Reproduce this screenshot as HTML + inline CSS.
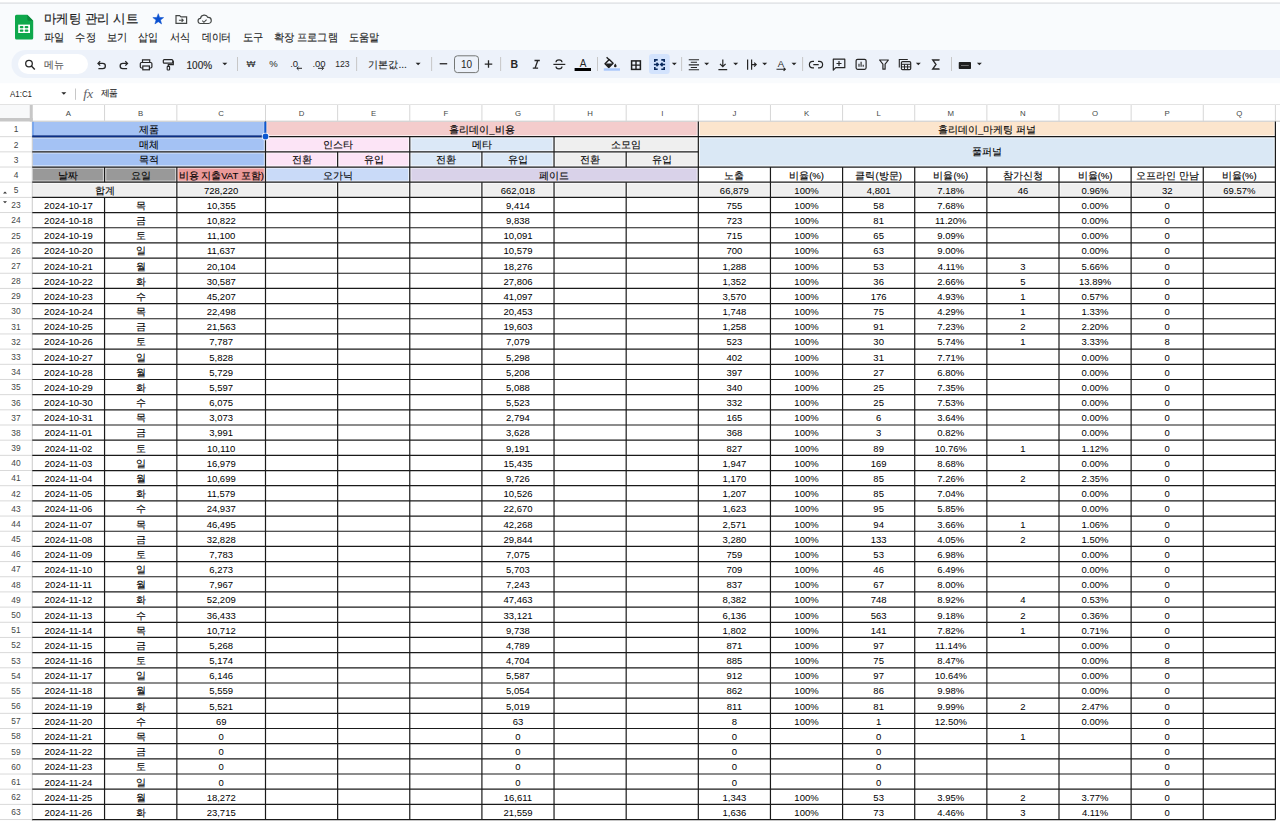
<!DOCTYPE html>
<html><head><meta charset="utf-8"><title>마케팅 관리 시트</title>
<style>html,body{margin:0;padding:0;width:1280px;height:821px;overflow:hidden;background:#fff;font-family:'Liberation Sans', sans-serif;}</style>
</head><body>
<svg width="1280" height="821" viewBox="0 0 1280 821" style="position:absolute;left:0;top:0;font-family:'Liberation Sans', sans-serif">
<rect x="0" y="0" width="1280" height="821" fill="#ffffff"/>
<rect x="0" y="3.5" width="1280" height="80" fill="#f9fbfd"/>
<rect x="0" y="2.5" width="1280" height="1.2" fill="#dadce0"/>
<rect x="11.5" y="50" width="1300" height="28" rx="14" fill="#edf2fa"/>
<rect x="18" y="54" width="70" height="20" rx="10" fill="#ffffff"/>
<rect x="32.26" y="121.50" width="233.24" height="45.53" fill="#a4c2f4"/>
<rect x="265.50" y="121.50" width="432.82" height="15.18" fill="#f4cccc"/>
<rect x="698.32" y="121.50" width="577.09" height="15.18" fill="#fce5cd"/>
<rect x="265.50" y="136.68" width="144.27" height="30.35" fill="#fce4f6"/>
<rect x="409.77" y="136.68" width="144.27" height="30.35" fill="#dbe8f7"/>
<rect x="554.04" y="136.68" width="144.27" height="30.35" fill="#efefef"/>
<rect x="698.32" y="136.68" width="577.09" height="30.35" fill="#dae8f5"/>
<rect x="32.26" y="167.03" width="144.59" height="15.17" fill="#999999"/>
<rect x="176.85" y="167.03" width="88.65" height="15.17" fill="#ea9999"/>
<rect x="265.50" y="167.03" width="144.27" height="15.17" fill="#c9daf8"/>
<rect x="409.77" y="167.03" width="288.54" height="15.17" fill="#d9d2e9"/>
<rect x="32.26" y="182.20" width="1243.14" height="15.18" fill="#efefef"/>
<rect x="0" y="104.5" width="1280" height="17" fill="#ffffff"/>
<rect x="0" y="104.5" width="30" height="14" fill="#f8f9fa"/>
<rect x="0" y="118" width="32.75" height="3.5" fill="#c7c7c7"/>
<rect x="29.75" y="104.5" width="3" height="17" fill="#c7c7c7"/>
<g stroke="#ffffff" stroke-opacity="0.6" stroke-width="3.4"><line x1="32.26" y1="136.68" x2="1275.40" y2="136.68"/><line x1="32.26" y1="151.85" x2="698.32" y2="151.85"/><line x1="32.26" y1="167.03" x2="1275.40" y2="167.03"/><line x1="32.26" y1="182.20" x2="1275.40" y2="182.20"/><line x1="32.26" y1="197.38" x2="1275.40" y2="197.38"/><line x1="265.50" y1="121.50" x2="265.50" y2="197.38"/><line x1="698.32" y1="121.50" x2="698.32" y2="197.38"/><line x1="1275.40" y1="121.50" x2="1275.40" y2="197.38"/><line x1="409.77" y1="136.68" x2="409.77" y2="167.03"/><line x1="554.04" y1="136.68" x2="554.04" y2="167.03"/><line x1="337.64" y1="151.85" x2="337.64" y2="167.03"/><line x1="481.91" y1="151.85" x2="481.91" y2="167.03"/><line x1="626.18" y1="151.85" x2="626.18" y2="167.03"/><line x1="104.56" y1="167.03" x2="104.56" y2="182.20"/><line x1="176.85" y1="167.03" x2="176.85" y2="182.20"/><line x1="409.77" y1="167.03" x2="409.77" y2="182.20"/><line x1="770.45" y1="167.03" x2="770.45" y2="182.20"/><line x1="842.59" y1="167.03" x2="842.59" y2="182.20"/><line x1="914.72" y1="167.03" x2="914.72" y2="182.20"/><line x1="986.86" y1="167.03" x2="986.86" y2="182.20"/><line x1="1059.00" y1="167.03" x2="1059.00" y2="182.20"/><line x1="1131.13" y1="167.03" x2="1131.13" y2="182.20"/><line x1="1203.27" y1="167.03" x2="1203.27" y2="182.20"/><line x1="176.85" y1="182.20" x2="176.85" y2="197.38"/><line x1="337.64" y1="182.20" x2="337.64" y2="197.38"/><line x1="409.77" y1="182.20" x2="409.77" y2="197.38"/><line x1="481.91" y1="182.20" x2="481.91" y2="197.38"/><line x1="554.04" y1="182.20" x2="554.04" y2="197.38"/><line x1="626.18" y1="182.20" x2="626.18" y2="197.38"/><line x1="770.45" y1="182.20" x2="770.45" y2="197.38"/><line x1="842.59" y1="182.20" x2="842.59" y2="197.38"/><line x1="914.72" y1="182.20" x2="914.72" y2="197.38"/><line x1="986.86" y1="182.20" x2="986.86" y2="197.38"/><line x1="1059.00" y1="182.20" x2="1059.00" y2="197.38"/><line x1="1131.13" y1="182.20" x2="1131.13" y2="197.38"/><line x1="1203.27" y1="182.20" x2="1203.27" y2="197.38"/></g>
<line x1="0.00" y1="104.56" x2="1280.00" y2="104.56" stroke="#c7c7c7" stroke-width="1.1"/>
<line x1="32.00" y1="121.20" x2="1280.00" y2="121.20" stroke="#c7c7c7" stroke-width="1"/>
<line x1="104.56" y1="104.50" x2="104.56" y2="121.20" stroke="#d6d6d6" stroke-width="1"/>
<line x1="176.85" y1="104.50" x2="176.85" y2="121.20" stroke="#d6d6d6" stroke-width="1"/>
<line x1="265.50" y1="104.50" x2="265.50" y2="121.20" stroke="#d6d6d6" stroke-width="1"/>
<line x1="337.64" y1="104.50" x2="337.64" y2="121.20" stroke="#d6d6d6" stroke-width="1"/>
<line x1="409.77" y1="104.50" x2="409.77" y2="121.20" stroke="#d6d6d6" stroke-width="1"/>
<line x1="481.91" y1="104.50" x2="481.91" y2="121.20" stroke="#d6d6d6" stroke-width="1"/>
<line x1="554.04" y1="104.50" x2="554.04" y2="121.20" stroke="#d6d6d6" stroke-width="1"/>
<line x1="626.18" y1="104.50" x2="626.18" y2="121.20" stroke="#d6d6d6" stroke-width="1"/>
<line x1="698.32" y1="104.50" x2="698.32" y2="121.20" stroke="#d6d6d6" stroke-width="1"/>
<line x1="770.45" y1="104.50" x2="770.45" y2="121.20" stroke="#d6d6d6" stroke-width="1"/>
<line x1="842.59" y1="104.50" x2="842.59" y2="121.20" stroke="#d6d6d6" stroke-width="1"/>
<line x1="914.72" y1="104.50" x2="914.72" y2="121.20" stroke="#d6d6d6" stroke-width="1"/>
<line x1="986.86" y1="104.50" x2="986.86" y2="121.20" stroke="#d6d6d6" stroke-width="1"/>
<line x1="1059.00" y1="104.50" x2="1059.00" y2="121.20" stroke="#d6d6d6" stroke-width="1"/>
<line x1="1131.13" y1="104.50" x2="1131.13" y2="121.20" stroke="#d6d6d6" stroke-width="1"/>
<line x1="1203.27" y1="104.50" x2="1203.27" y2="121.20" stroke="#d6d6d6" stroke-width="1"/>
<line x1="1275.40" y1="104.50" x2="1275.40" y2="121.20" stroke="#d6d6d6" stroke-width="1"/>
<line x1="0.00" y1="136.68" x2="32.00" y2="136.68" stroke="#d9d9d9" stroke-width="1"/>
<line x1="0.00" y1="151.85" x2="32.00" y2="151.85" stroke="#d9d9d9" stroke-width="1"/>
<line x1="0.00" y1="167.03" x2="32.00" y2="167.03" stroke="#d9d9d9" stroke-width="1"/>
<line x1="0.00" y1="182.20" x2="32.00" y2="182.20" stroke="#d9d9d9" stroke-width="1"/>
<line x1="0.00" y1="197.38" x2="32.00" y2="197.38" stroke="#d9d9d9" stroke-width="1"/>
<line x1="0.00" y1="212.55" x2="32.00" y2="212.55" stroke="#d9d9d9" stroke-width="1"/>
<line x1="0.00" y1="227.73" x2="32.00" y2="227.73" stroke="#d9d9d9" stroke-width="1"/>
<line x1="0.00" y1="242.90" x2="32.00" y2="242.90" stroke="#d9d9d9" stroke-width="1"/>
<line x1="0.00" y1="258.08" x2="32.00" y2="258.08" stroke="#d9d9d9" stroke-width="1"/>
<line x1="0.00" y1="273.25" x2="32.00" y2="273.25" stroke="#d9d9d9" stroke-width="1"/>
<line x1="0.00" y1="288.43" x2="32.00" y2="288.43" stroke="#d9d9d9" stroke-width="1"/>
<line x1="0.00" y1="303.60" x2="32.00" y2="303.60" stroke="#d9d9d9" stroke-width="1"/>
<line x1="0.00" y1="318.77" x2="32.00" y2="318.77" stroke="#d9d9d9" stroke-width="1"/>
<line x1="0.00" y1="333.95" x2="32.00" y2="333.95" stroke="#d9d9d9" stroke-width="1"/>
<line x1="0.00" y1="349.12" x2="32.00" y2="349.12" stroke="#d9d9d9" stroke-width="1"/>
<line x1="0.00" y1="364.30" x2="32.00" y2="364.30" stroke="#d9d9d9" stroke-width="1"/>
<line x1="0.00" y1="379.48" x2="32.00" y2="379.48" stroke="#d9d9d9" stroke-width="1"/>
<line x1="0.00" y1="394.65" x2="32.00" y2="394.65" stroke="#d9d9d9" stroke-width="1"/>
<line x1="0.00" y1="409.82" x2="32.00" y2="409.82" stroke="#d9d9d9" stroke-width="1"/>
<line x1="0.00" y1="425.00" x2="32.00" y2="425.00" stroke="#d9d9d9" stroke-width="1"/>
<line x1="0.00" y1="440.18" x2="32.00" y2="440.18" stroke="#d9d9d9" stroke-width="1"/>
<line x1="0.00" y1="455.35" x2="32.00" y2="455.35" stroke="#d9d9d9" stroke-width="1"/>
<line x1="0.00" y1="470.53" x2="32.00" y2="470.53" stroke="#d9d9d9" stroke-width="1"/>
<line x1="0.00" y1="485.70" x2="32.00" y2="485.70" stroke="#d9d9d9" stroke-width="1"/>
<line x1="0.00" y1="500.88" x2="32.00" y2="500.88" stroke="#d9d9d9" stroke-width="1"/>
<line x1="0.00" y1="516.05" x2="32.00" y2="516.05" stroke="#d9d9d9" stroke-width="1"/>
<line x1="0.00" y1="531.23" x2="32.00" y2="531.23" stroke="#d9d9d9" stroke-width="1"/>
<line x1="0.00" y1="546.40" x2="32.00" y2="546.40" stroke="#d9d9d9" stroke-width="1"/>
<line x1="0.00" y1="561.58" x2="32.00" y2="561.58" stroke="#d9d9d9" stroke-width="1"/>
<line x1="0.00" y1="576.75" x2="32.00" y2="576.75" stroke="#d9d9d9" stroke-width="1"/>
<line x1="0.00" y1="591.92" x2="32.00" y2="591.92" stroke="#d9d9d9" stroke-width="1"/>
<line x1="0.00" y1="607.10" x2="32.00" y2="607.10" stroke="#d9d9d9" stroke-width="1"/>
<line x1="0.00" y1="622.28" x2="32.00" y2="622.28" stroke="#d9d9d9" stroke-width="1"/>
<line x1="0.00" y1="637.45" x2="32.00" y2="637.45" stroke="#d9d9d9" stroke-width="1"/>
<line x1="0.00" y1="652.62" x2="32.00" y2="652.62" stroke="#d9d9d9" stroke-width="1"/>
<line x1="0.00" y1="667.80" x2="32.00" y2="667.80" stroke="#d9d9d9" stroke-width="1"/>
<line x1="0.00" y1="682.98" x2="32.00" y2="682.98" stroke="#d9d9d9" stroke-width="1"/>
<line x1="0.00" y1="698.15" x2="32.00" y2="698.15" stroke="#d9d9d9" stroke-width="1"/>
<line x1="0.00" y1="713.33" x2="32.00" y2="713.33" stroke="#d9d9d9" stroke-width="1"/>
<line x1="0.00" y1="728.50" x2="32.00" y2="728.50" stroke="#d9d9d9" stroke-width="1"/>
<line x1="0.00" y1="743.68" x2="32.00" y2="743.68" stroke="#d9d9d9" stroke-width="1"/>
<line x1="0.00" y1="758.85" x2="32.00" y2="758.85" stroke="#d9d9d9" stroke-width="1"/>
<line x1="0.00" y1="774.02" x2="32.00" y2="774.02" stroke="#d9d9d9" stroke-width="1"/>
<line x1="0.00" y1="789.20" x2="32.00" y2="789.20" stroke="#d9d9d9" stroke-width="1"/>
<line x1="0.00" y1="804.38" x2="32.00" y2="804.38" stroke="#d9d9d9" stroke-width="1"/>
<line x1="0.00" y1="819.55" x2="32.00" y2="819.55" stroke="#d9d9d9" stroke-width="1"/>
<line x1="32.30" y1="121.50" x2="32.30" y2="821.00" stroke="#cfcfcf" stroke-width="1.1"/>
<line x1="32.26" y1="136.68" x2="1275.40" y2="136.68" stroke="#1a1a1a" stroke-width="1.2"/>
<line x1="32.26" y1="151.85" x2="698.32" y2="151.85" stroke="#1a1a1a" stroke-width="1.2"/>
<line x1="32.26" y1="167.03" x2="1275.40" y2="167.03" stroke="#1a1a1a" stroke-width="1.2"/>
<line x1="32.26" y1="182.20" x2="1275.40" y2="182.20" stroke="#1a1a1a" stroke-width="1.2"/>
<line x1="32.26" y1="197.38" x2="1275.40" y2="197.38" stroke="#1a1a1a" stroke-width="1.2"/>
<line x1="32.26" y1="212.55" x2="1275.40" y2="212.55" stroke="#1a1a1a" stroke-width="1.2"/>
<line x1="32.26" y1="227.73" x2="1275.40" y2="227.73" stroke="#1a1a1a" stroke-width="1.2"/>
<line x1="32.26" y1="242.90" x2="1275.40" y2="242.90" stroke="#1a1a1a" stroke-width="1.2"/>
<line x1="32.26" y1="258.08" x2="1275.40" y2="258.08" stroke="#1a1a1a" stroke-width="1.2"/>
<line x1="32.26" y1="273.25" x2="1275.40" y2="273.25" stroke="#1a1a1a" stroke-width="1.2"/>
<line x1="32.26" y1="288.43" x2="1275.40" y2="288.43" stroke="#1a1a1a" stroke-width="1.2"/>
<line x1="32.26" y1="303.60" x2="1275.40" y2="303.60" stroke="#1a1a1a" stroke-width="1.2"/>
<line x1="32.26" y1="318.77" x2="1275.40" y2="318.77" stroke="#1a1a1a" stroke-width="1.2"/>
<line x1="32.26" y1="333.95" x2="1275.40" y2="333.95" stroke="#1a1a1a" stroke-width="1.2"/>
<line x1="32.26" y1="349.12" x2="1275.40" y2="349.12" stroke="#1a1a1a" stroke-width="1.2"/>
<line x1="32.26" y1="364.30" x2="1275.40" y2="364.30" stroke="#1a1a1a" stroke-width="1.2"/>
<line x1="32.26" y1="379.48" x2="1275.40" y2="379.48" stroke="#1a1a1a" stroke-width="1.2"/>
<line x1="32.26" y1="394.65" x2="1275.40" y2="394.65" stroke="#1a1a1a" stroke-width="1.2"/>
<line x1="32.26" y1="409.82" x2="1275.40" y2="409.82" stroke="#1a1a1a" stroke-width="1.2"/>
<line x1="32.26" y1="425.00" x2="1275.40" y2="425.00" stroke="#1a1a1a" stroke-width="1.2"/>
<line x1="32.26" y1="440.18" x2="1275.40" y2="440.18" stroke="#1a1a1a" stroke-width="1.2"/>
<line x1="32.26" y1="455.35" x2="1275.40" y2="455.35" stroke="#1a1a1a" stroke-width="1.2"/>
<line x1="32.26" y1="470.53" x2="1275.40" y2="470.53" stroke="#1a1a1a" stroke-width="1.2"/>
<line x1="32.26" y1="485.70" x2="1275.40" y2="485.70" stroke="#1a1a1a" stroke-width="1.2"/>
<line x1="32.26" y1="500.88" x2="1275.40" y2="500.88" stroke="#1a1a1a" stroke-width="1.2"/>
<line x1="32.26" y1="516.05" x2="1275.40" y2="516.05" stroke="#1a1a1a" stroke-width="1.2"/>
<line x1="32.26" y1="531.23" x2="1275.40" y2="531.23" stroke="#1a1a1a" stroke-width="1.2"/>
<line x1="32.26" y1="546.40" x2="1275.40" y2="546.40" stroke="#1a1a1a" stroke-width="1.2"/>
<line x1="32.26" y1="561.58" x2="1275.40" y2="561.58" stroke="#1a1a1a" stroke-width="1.2"/>
<line x1="32.26" y1="576.75" x2="1275.40" y2="576.75" stroke="#1a1a1a" stroke-width="1.2"/>
<line x1="32.26" y1="591.92" x2="1275.40" y2="591.92" stroke="#1a1a1a" stroke-width="1.2"/>
<line x1="32.26" y1="607.10" x2="1275.40" y2="607.10" stroke="#1a1a1a" stroke-width="1.2"/>
<line x1="32.26" y1="622.28" x2="1275.40" y2="622.28" stroke="#1a1a1a" stroke-width="1.2"/>
<line x1="32.26" y1="637.45" x2="1275.40" y2="637.45" stroke="#1a1a1a" stroke-width="1.2"/>
<line x1="32.26" y1="652.62" x2="1275.40" y2="652.62" stroke="#1a1a1a" stroke-width="1.2"/>
<line x1="32.26" y1="667.80" x2="1275.40" y2="667.80" stroke="#1a1a1a" stroke-width="1.2"/>
<line x1="32.26" y1="682.98" x2="1275.40" y2="682.98" stroke="#1a1a1a" stroke-width="1.2"/>
<line x1="32.26" y1="698.15" x2="1275.40" y2="698.15" stroke="#1a1a1a" stroke-width="1.2"/>
<line x1="32.26" y1="713.33" x2="1275.40" y2="713.33" stroke="#1a1a1a" stroke-width="1.2"/>
<line x1="32.26" y1="728.50" x2="1275.40" y2="728.50" stroke="#1a1a1a" stroke-width="1.2"/>
<line x1="32.26" y1="743.68" x2="1275.40" y2="743.68" stroke="#1a1a1a" stroke-width="1.2"/>
<line x1="32.26" y1="758.85" x2="1275.40" y2="758.85" stroke="#1a1a1a" stroke-width="1.2"/>
<line x1="32.26" y1="774.02" x2="1275.40" y2="774.02" stroke="#1a1a1a" stroke-width="1.2"/>
<line x1="32.26" y1="789.20" x2="1275.40" y2="789.20" stroke="#1a1a1a" stroke-width="1.2"/>
<line x1="32.26" y1="804.38" x2="1275.40" y2="804.38" stroke="#1a1a1a" stroke-width="1.2"/>
<line x1="32.26" y1="819.55" x2="1275.40" y2="819.55" stroke="#1a1a1a" stroke-width="1.2"/>
<line x1="265.50" y1="121.50" x2="265.50" y2="819.55" stroke="#1a1a1a" stroke-width="1.2"/>
<line x1="698.32" y1="121.50" x2="698.32" y2="819.55" stroke="#1a1a1a" stroke-width="1.2"/>
<line x1="1275.40" y1="121.50" x2="1275.40" y2="819.55" stroke="#1a1a1a" stroke-width="1.2"/>
<line x1="409.77" y1="136.68" x2="409.77" y2="167.03" stroke="#1a1a1a" stroke-width="1.2"/>
<line x1="554.04" y1="136.68" x2="554.04" y2="167.03" stroke="#1a1a1a" stroke-width="1.2"/>
<line x1="337.64" y1="151.85" x2="337.64" y2="167.03" stroke="#1a1a1a" stroke-width="1.2"/>
<line x1="481.91" y1="151.85" x2="481.91" y2="167.03" stroke="#1a1a1a" stroke-width="1.2"/>
<line x1="626.18" y1="151.85" x2="626.18" y2="167.03" stroke="#1a1a1a" stroke-width="1.2"/>
<line x1="104.56" y1="167.03" x2="104.56" y2="182.20" stroke="#1a1a1a" stroke-width="1.2"/>
<line x1="176.85" y1="167.03" x2="176.85" y2="182.20" stroke="#1a1a1a" stroke-width="1.2"/>
<line x1="409.77" y1="167.03" x2="409.77" y2="182.20" stroke="#1a1a1a" stroke-width="1.2"/>
<line x1="770.45" y1="167.03" x2="770.45" y2="182.20" stroke="#1a1a1a" stroke-width="1.2"/>
<line x1="842.59" y1="167.03" x2="842.59" y2="182.20" stroke="#1a1a1a" stroke-width="1.2"/>
<line x1="914.72" y1="167.03" x2="914.72" y2="182.20" stroke="#1a1a1a" stroke-width="1.2"/>
<line x1="986.86" y1="167.03" x2="986.86" y2="182.20" stroke="#1a1a1a" stroke-width="1.2"/>
<line x1="1059.00" y1="167.03" x2="1059.00" y2="182.20" stroke="#1a1a1a" stroke-width="1.2"/>
<line x1="1131.13" y1="167.03" x2="1131.13" y2="182.20" stroke="#1a1a1a" stroke-width="1.2"/>
<line x1="1203.27" y1="167.03" x2="1203.27" y2="182.20" stroke="#1a1a1a" stroke-width="1.2"/>
<line x1="176.85" y1="182.20" x2="176.85" y2="197.38" stroke="#1a1a1a" stroke-width="1.2"/>
<line x1="337.64" y1="182.20" x2="337.64" y2="197.38" stroke="#1a1a1a" stroke-width="1.2"/>
<line x1="409.77" y1="182.20" x2="409.77" y2="197.38" stroke="#1a1a1a" stroke-width="1.2"/>
<line x1="481.91" y1="182.20" x2="481.91" y2="197.38" stroke="#1a1a1a" stroke-width="1.2"/>
<line x1="554.04" y1="182.20" x2="554.04" y2="197.38" stroke="#1a1a1a" stroke-width="1.2"/>
<line x1="626.18" y1="182.20" x2="626.18" y2="197.38" stroke="#1a1a1a" stroke-width="1.2"/>
<line x1="770.45" y1="182.20" x2="770.45" y2="197.38" stroke="#1a1a1a" stroke-width="1.2"/>
<line x1="842.59" y1="182.20" x2="842.59" y2="197.38" stroke="#1a1a1a" stroke-width="1.2"/>
<line x1="914.72" y1="182.20" x2="914.72" y2="197.38" stroke="#1a1a1a" stroke-width="1.2"/>
<line x1="986.86" y1="182.20" x2="986.86" y2="197.38" stroke="#1a1a1a" stroke-width="1.2"/>
<line x1="1059.00" y1="182.20" x2="1059.00" y2="197.38" stroke="#1a1a1a" stroke-width="1.2"/>
<line x1="1131.13" y1="182.20" x2="1131.13" y2="197.38" stroke="#1a1a1a" stroke-width="1.2"/>
<line x1="1203.27" y1="182.20" x2="1203.27" y2="197.38" stroke="#1a1a1a" stroke-width="1.2"/>
<line x1="104.56" y1="197.38" x2="104.56" y2="819.55" stroke="#1a1a1a" stroke-width="1.2"/>
<line x1="176.85" y1="197.38" x2="176.85" y2="819.55" stroke="#1a1a1a" stroke-width="1.2"/>
<line x1="337.64" y1="197.38" x2="337.64" y2="819.55" stroke="#1a1a1a" stroke-width="1.2"/>
<line x1="409.77" y1="197.38" x2="409.77" y2="819.55" stroke="#1a1a1a" stroke-width="1.2"/>
<line x1="481.91" y1="197.38" x2="481.91" y2="819.55" stroke="#1a1a1a" stroke-width="1.2"/>
<line x1="554.04" y1="197.38" x2="554.04" y2="819.55" stroke="#1a1a1a" stroke-width="1.2"/>
<line x1="626.18" y1="197.38" x2="626.18" y2="819.55" stroke="#1a1a1a" stroke-width="1.2"/>
<line x1="770.45" y1="197.38" x2="770.45" y2="819.55" stroke="#1a1a1a" stroke-width="1.2"/>
<line x1="842.59" y1="197.38" x2="842.59" y2="819.55" stroke="#1a1a1a" stroke-width="1.2"/>
<line x1="914.72" y1="197.38" x2="914.72" y2="819.55" stroke="#1a1a1a" stroke-width="1.2"/>
<line x1="986.86" y1="197.38" x2="986.86" y2="819.55" stroke="#1a1a1a" stroke-width="1.2"/>
<line x1="1059.00" y1="197.38" x2="1059.00" y2="819.55" stroke="#1a1a1a" stroke-width="1.2"/>
<line x1="1131.13" y1="197.38" x2="1131.13" y2="819.55" stroke="#1a1a1a" stroke-width="1.2"/>
<line x1="1203.27" y1="197.38" x2="1203.27" y2="819.55" stroke="#1a1a1a" stroke-width="1.2"/>
<rect x="32.4" y="121.8" width="1.1" height="15" fill="#4f8ef0"/>
<rect x="32.4" y="135.3" width="233.6" height="2" fill="#0b2f86"/>
<rect x="264.3" y="121.8" width="2" height="15" fill="#0b57d0"/>
<circle cx="265.5" cy="136.5" r="3.7" fill="#ffffff"/><circle cx="265.5" cy="136.5" r="2.9" fill="#0b57d0"/>
<text x="68.41" y="116.00" font-size="7.8" text-anchor="middle" fill="#444746" font-weight="normal" >A</text>
<text x="140.70" y="116.00" font-size="7.8" text-anchor="middle" fill="#444746" font-weight="normal" >B</text>
<text x="221.18" y="116.00" font-size="7.8" text-anchor="middle" fill="#444746" font-weight="normal" >C</text>
<text x="301.57" y="116.00" font-size="7.8" text-anchor="middle" fill="#444746" font-weight="normal" >D</text>
<text x="373.70" y="116.00" font-size="7.8" text-anchor="middle" fill="#444746" font-weight="normal" >E</text>
<text x="445.84" y="116.00" font-size="7.8" text-anchor="middle" fill="#444746" font-weight="normal" >F</text>
<text x="517.98" y="116.00" font-size="7.8" text-anchor="middle" fill="#444746" font-weight="normal" >G</text>
<text x="590.11" y="116.00" font-size="7.8" text-anchor="middle" fill="#444746" font-weight="normal" >H</text>
<text x="662.25" y="116.00" font-size="7.8" text-anchor="middle" fill="#444746" font-weight="normal" >I</text>
<text x="734.38" y="116.00" font-size="7.8" text-anchor="middle" fill="#444746" font-weight="normal" >J</text>
<text x="806.52" y="116.00" font-size="7.8" text-anchor="middle" fill="#444746" font-weight="normal" >K</text>
<text x="878.66" y="116.00" font-size="7.8" text-anchor="middle" fill="#444746" font-weight="normal" >L</text>
<text x="950.79" y="116.00" font-size="7.8" text-anchor="middle" fill="#444746" font-weight="normal" >M</text>
<text x="1022.93" y="116.00" font-size="7.8" text-anchor="middle" fill="#444746" font-weight="normal" >N</text>
<text x="1095.06" y="116.00" font-size="7.8" text-anchor="middle" fill="#444746" font-weight="normal" >O</text>
<text x="1167.20" y="116.00" font-size="7.8" text-anchor="middle" fill="#444746" font-weight="normal" >P</text>
<text x="1239.34" y="116.00" font-size="7.8" text-anchor="middle" fill="#444746" font-weight="normal" >Q</text>
<text x="16.00" y="132.38" font-size="8.4" text-anchor="middle" fill="#444746" font-weight="normal" >1</text>
<text x="16.00" y="147.55" font-size="8.4" text-anchor="middle" fill="#444746" font-weight="normal" >2</text>
<text x="16.00" y="162.72" font-size="8.4" text-anchor="middle" fill="#444746" font-weight="normal" >3</text>
<text x="16.00" y="177.90" font-size="8.4" text-anchor="middle" fill="#444746" font-weight="normal" >4</text>
<text x="16.00" y="193.07" font-size="8.4" text-anchor="middle" fill="#444746" font-weight="normal" >5</text>
<text x="16.00" y="208.25" font-size="8.4" text-anchor="middle" fill="#444746" font-weight="normal" >23</text>
<text x="16.00" y="223.43" font-size="8.4" text-anchor="middle" fill="#444746" font-weight="normal" >24</text>
<text x="16.00" y="238.60" font-size="8.4" text-anchor="middle" fill="#444746" font-weight="normal" >25</text>
<text x="16.00" y="253.78" font-size="8.4" text-anchor="middle" fill="#444746" font-weight="normal" >26</text>
<text x="16.00" y="268.95" font-size="8.4" text-anchor="middle" fill="#444746" font-weight="normal" >27</text>
<text x="16.00" y="284.12" font-size="8.4" text-anchor="middle" fill="#444746" font-weight="normal" >28</text>
<text x="16.00" y="299.30" font-size="8.4" text-anchor="middle" fill="#444746" font-weight="normal" >29</text>
<text x="16.00" y="314.47" font-size="8.4" text-anchor="middle" fill="#444746" font-weight="normal" >30</text>
<text x="16.00" y="329.65" font-size="8.4" text-anchor="middle" fill="#444746" font-weight="normal" >31</text>
<text x="16.00" y="344.82" font-size="8.4" text-anchor="middle" fill="#444746" font-weight="normal" >32</text>
<text x="16.00" y="360.00" font-size="8.4" text-anchor="middle" fill="#444746" font-weight="normal" >33</text>
<text x="16.00" y="375.18" font-size="8.4" text-anchor="middle" fill="#444746" font-weight="normal" >34</text>
<text x="16.00" y="390.35" font-size="8.4" text-anchor="middle" fill="#444746" font-weight="normal" >35</text>
<text x="16.00" y="405.52" font-size="8.4" text-anchor="middle" fill="#444746" font-weight="normal" >36</text>
<text x="16.00" y="420.70" font-size="8.4" text-anchor="middle" fill="#444746" font-weight="normal" >37</text>
<text x="16.00" y="435.88" font-size="8.4" text-anchor="middle" fill="#444746" font-weight="normal" >38</text>
<text x="16.00" y="451.05" font-size="8.4" text-anchor="middle" fill="#444746" font-weight="normal" >39</text>
<text x="16.00" y="466.23" font-size="8.4" text-anchor="middle" fill="#444746" font-weight="normal" >40</text>
<text x="16.00" y="481.40" font-size="8.4" text-anchor="middle" fill="#444746" font-weight="normal" >41</text>
<text x="16.00" y="496.57" font-size="8.4" text-anchor="middle" fill="#444746" font-weight="normal" >42</text>
<text x="16.00" y="511.75" font-size="8.4" text-anchor="middle" fill="#444746" font-weight="normal" >43</text>
<text x="16.00" y="526.93" font-size="8.4" text-anchor="middle" fill="#444746" font-weight="normal" >44</text>
<text x="16.00" y="542.10" font-size="8.4" text-anchor="middle" fill="#444746" font-weight="normal" >45</text>
<text x="16.00" y="557.28" font-size="8.4" text-anchor="middle" fill="#444746" font-weight="normal" >46</text>
<text x="16.00" y="572.45" font-size="8.4" text-anchor="middle" fill="#444746" font-weight="normal" >47</text>
<text x="16.00" y="587.62" font-size="8.4" text-anchor="middle" fill="#444746" font-weight="normal" >48</text>
<text x="16.00" y="602.80" font-size="8.4" text-anchor="middle" fill="#444746" font-weight="normal" >49</text>
<text x="16.00" y="617.98" font-size="8.4" text-anchor="middle" fill="#444746" font-weight="normal" >50</text>
<text x="16.00" y="633.15" font-size="8.4" text-anchor="middle" fill="#444746" font-weight="normal" >51</text>
<text x="16.00" y="648.33" font-size="8.4" text-anchor="middle" fill="#444746" font-weight="normal" >52</text>
<text x="16.00" y="663.50" font-size="8.4" text-anchor="middle" fill="#444746" font-weight="normal" >53</text>
<text x="16.00" y="678.68" font-size="8.4" text-anchor="middle" fill="#444746" font-weight="normal" >54</text>
<text x="16.00" y="693.85" font-size="8.4" text-anchor="middle" fill="#444746" font-weight="normal" >55</text>
<text x="16.00" y="709.03" font-size="8.4" text-anchor="middle" fill="#444746" font-weight="normal" >56</text>
<text x="16.00" y="724.20" font-size="8.4" text-anchor="middle" fill="#444746" font-weight="normal" >57</text>
<text x="16.00" y="739.38" font-size="8.4" text-anchor="middle" fill="#444746" font-weight="normal" >58</text>
<text x="16.00" y="754.55" font-size="8.4" text-anchor="middle" fill="#444746" font-weight="normal" >59</text>
<text x="16.00" y="769.73" font-size="8.4" text-anchor="middle" fill="#444746" font-weight="normal" >60</text>
<text x="16.00" y="784.90" font-size="8.4" text-anchor="middle" fill="#444746" font-weight="normal" >61</text>
<text x="16.00" y="800.08" font-size="8.4" text-anchor="middle" fill="#444746" font-weight="normal" >62</text>
<text x="16.00" y="815.25" font-size="8.4" text-anchor="middle" fill="#444746" font-weight="normal" >63</text>
<path d="M3 193.6 l2 -2.2 2 2.2z" fill="#333"/><path d="M3 201.3 l2 2 2 -2z" fill="#333"/>
<defs><clipPath id="clipC4"><rect x="177.5" y="167.03" width="87.5" height="15.18"/></clipPath></defs>
<text x="148.88" y="132.98" font-size="9.5" text-anchor="middle" fill="#000" font-weight="normal"  stroke="#000" stroke-width="0.1">제품</text>
<text x="481.91" y="132.98" font-size="9.5" text-anchor="middle" fill="#000" font-weight="normal"  stroke="#000" stroke-width="0.12">홀리데이_비용</text>
<text x="986.86" y="132.98" font-size="9.5" text-anchor="middle" fill="#000" font-weight="normal"  stroke="#000" stroke-width="0.12">홀리데이_마케팅 퍼널</text>
<text x="148.88" y="148.15" font-size="9.5" text-anchor="middle" fill="#000" font-weight="normal"  stroke="#000" stroke-width="0.1">매체</text>
<text x="337.64" y="148.15" font-size="9.5" text-anchor="middle" fill="#000" font-weight="normal"  stroke="#000" stroke-width="0.12">인스타</text>
<text x="481.91" y="148.15" font-size="9.5" text-anchor="middle" fill="#000" font-weight="normal"  stroke="#000" stroke-width="0.12">메타</text>
<text x="626.18" y="148.15" font-size="9.5" text-anchor="middle" fill="#000" font-weight="normal"  stroke="#000" stroke-width="0.12">소모임</text>
<text x="986.86" y="155.22" font-size="9.5" text-anchor="middle" fill="#000" font-weight="normal"  stroke="#000" stroke-width="0.12">풀퍼널</text>
<text x="148.88" y="163.33" font-size="9.5" text-anchor="middle" fill="#000" font-weight="normal"  stroke="#000" stroke-width="0.1">목적</text>
<text x="301.57" y="163.33" font-size="9.5" text-anchor="middle" fill="#000" font-weight="normal"  stroke="#000" stroke-width="0.12">전환</text>
<text x="373.70" y="163.33" font-size="9.5" text-anchor="middle" fill="#000" font-weight="normal"  stroke="#000" stroke-width="0.12">유입</text>
<text x="445.84" y="163.33" font-size="9.5" text-anchor="middle" fill="#000" font-weight="normal"  stroke="#000" stroke-width="0.12">전환</text>
<text x="517.98" y="163.33" font-size="9.5" text-anchor="middle" fill="#000" font-weight="normal"  stroke="#000" stroke-width="0.12">유입</text>
<text x="590.11" y="163.33" font-size="9.5" text-anchor="middle" fill="#000" font-weight="normal"  stroke="#000" stroke-width="0.12">전환</text>
<text x="662.25" y="163.33" font-size="9.5" text-anchor="middle" fill="#000" font-weight="normal"  stroke="#000" stroke-width="0.12">유입</text>
<text x="68.41" y="178.50" font-size="9.5" text-anchor="middle" fill="#000" font-weight="normal"  stroke="#000" stroke-width="0.1">날짜</text>
<text x="140.70" y="178.50" font-size="9.5" text-anchor="middle" fill="#000" font-weight="normal"  stroke="#000" stroke-width="0.1">요일</text>
<text x="221.18" y="178.50" font-size="9.5" text-anchor="middle" fill="#000" font-weight="normal" clip-path="url(#clipC4)" stroke="#000" stroke-width="0.12">비용 지출VAT 포함)</text>
<text x="337.64" y="178.50" font-size="9.5" text-anchor="middle" fill="#000" font-weight="normal"  stroke="#000" stroke-width="0.12">오가닉</text>
<text x="554.04" y="178.50" font-size="9.5" text-anchor="middle" fill="#000" font-weight="normal"  stroke="#000" stroke-width="0.12">페이드</text>
<text x="734.38" y="178.50" font-size="9.5" text-anchor="middle" fill="#000" font-weight="normal"  stroke="#000" stroke-width="0.12">노출</text>
<text x="806.52" y="178.50" font-size="9.5" text-anchor="middle" fill="#000" font-weight="normal"  stroke="#000" stroke-width="0.12">비율(%)</text>
<text x="878.66" y="178.50" font-size="9.5" text-anchor="middle" fill="#000" font-weight="normal"  stroke="#000" stroke-width="0.12">클릭(방문)</text>
<text x="950.79" y="178.50" font-size="9.5" text-anchor="middle" fill="#000" font-weight="normal"  stroke="#000" stroke-width="0.12">비율(%)</text>
<text x="1022.93" y="178.50" font-size="9.5" text-anchor="middle" fill="#000" font-weight="normal"  stroke="#000" stroke-width="0.12">참가신청</text>
<text x="1095.06" y="178.50" font-size="9.5" text-anchor="middle" fill="#000" font-weight="normal"  stroke="#000" stroke-width="0.12">비율(%)</text>
<text x="1167.20" y="178.50" font-size="9.5" text-anchor="middle" fill="#000" font-weight="normal"  stroke="#000" stroke-width="0.12">오프라인 만남</text>
<text x="1239.34" y="178.50" font-size="9.5" text-anchor="middle" fill="#000" font-weight="normal"  stroke="#000" stroke-width="0.12">비율(%)</text>
<text x="104.55" y="193.68" font-size="9.5" text-anchor="middle" fill="#000" font-weight="normal"  stroke="#000" stroke-width="0.12">합계</text>
<text x="221.18" y="193.68" font-size="9.5" text-anchor="middle" fill="#000" font-weight="normal" >728,220</text>
<text x="517.98" y="193.68" font-size="9.5" text-anchor="middle" fill="#000" font-weight="normal" >662,018</text>
<text x="734.38" y="193.68" font-size="9.5" text-anchor="middle" fill="#000" font-weight="normal" >66,879</text>
<text x="806.52" y="193.68" font-size="9.5" text-anchor="middle" fill="#000" font-weight="normal" >100%</text>
<text x="878.66" y="193.68" font-size="9.5" text-anchor="middle" fill="#000" font-weight="normal" >4,801</text>
<text x="950.79" y="193.68" font-size="9.5" text-anchor="middle" fill="#000" font-weight="normal" >7.18%</text>
<text x="1022.93" y="193.68" font-size="9.5" text-anchor="middle" fill="#000" font-weight="normal" >46</text>
<text x="1095.06" y="193.68" font-size="9.5" text-anchor="middle" fill="#000" font-weight="normal" >0.96%</text>
<text x="1167.20" y="193.68" font-size="9.5" text-anchor="middle" fill="#000" font-weight="normal" >32</text>
<text x="1239.34" y="193.68" font-size="9.5" text-anchor="middle" fill="#000" font-weight="normal" >69.57%</text>
<text x="68.41" y="208.85" font-size="9.5" text-anchor="middle" fill="#000" font-weight="normal" >2024-10-17</text>
<text x="140.70" y="208.85" font-size="9.5" text-anchor="middle" fill="#000" font-weight="normal"  stroke="#000" stroke-width="0.12">목</text>
<text x="221.18" y="208.85" font-size="9.5" text-anchor="middle" fill="#000" font-weight="normal" >10,355</text>
<text x="517.98" y="208.85" font-size="9.5" text-anchor="middle" fill="#000" font-weight="normal" >9,414</text>
<text x="734.38" y="208.85" font-size="9.5" text-anchor="middle" fill="#000" font-weight="normal" >755</text>
<text x="806.52" y="208.85" font-size="9.5" text-anchor="middle" fill="#000" font-weight="normal" >100%</text>
<text x="878.66" y="208.85" font-size="9.5" text-anchor="middle" fill="#000" font-weight="normal" >58</text>
<text x="950.79" y="208.85" font-size="9.5" text-anchor="middle" fill="#000" font-weight="normal" >7.68%</text>
<text x="1095.06" y="208.85" font-size="9.5" text-anchor="middle" fill="#000" font-weight="normal" >0.00%</text>
<text x="1167.20" y="208.85" font-size="9.5" text-anchor="middle" fill="#000" font-weight="normal" >0</text>
<text x="68.41" y="224.03" font-size="9.5" text-anchor="middle" fill="#000" font-weight="normal" >2024-10-18</text>
<text x="140.70" y="224.03" font-size="9.5" text-anchor="middle" fill="#000" font-weight="normal"  stroke="#000" stroke-width="0.12">금</text>
<text x="221.18" y="224.03" font-size="9.5" text-anchor="middle" fill="#000" font-weight="normal" >10,822</text>
<text x="517.98" y="224.03" font-size="9.5" text-anchor="middle" fill="#000" font-weight="normal" >9,838</text>
<text x="734.38" y="224.03" font-size="9.5" text-anchor="middle" fill="#000" font-weight="normal" >723</text>
<text x="806.52" y="224.03" font-size="9.5" text-anchor="middle" fill="#000" font-weight="normal" >100%</text>
<text x="878.66" y="224.03" font-size="9.5" text-anchor="middle" fill="#000" font-weight="normal" >81</text>
<text x="950.79" y="224.03" font-size="9.5" text-anchor="middle" fill="#000" font-weight="normal" >11.20%</text>
<text x="1095.06" y="224.03" font-size="9.5" text-anchor="middle" fill="#000" font-weight="normal" >0.00%</text>
<text x="1167.20" y="224.03" font-size="9.5" text-anchor="middle" fill="#000" font-weight="normal" >0</text>
<text x="68.41" y="239.20" font-size="9.5" text-anchor="middle" fill="#000" font-weight="normal" >2024-10-19</text>
<text x="140.70" y="239.20" font-size="9.5" text-anchor="middle" fill="#000" font-weight="normal"  stroke="#000" stroke-width="0.12">토</text>
<text x="221.18" y="239.20" font-size="9.5" text-anchor="middle" fill="#000" font-weight="normal" >11,100</text>
<text x="517.98" y="239.20" font-size="9.5" text-anchor="middle" fill="#000" font-weight="normal" >10,091</text>
<text x="734.38" y="239.20" font-size="9.5" text-anchor="middle" fill="#000" font-weight="normal" >715</text>
<text x="806.52" y="239.20" font-size="9.5" text-anchor="middle" fill="#000" font-weight="normal" >100%</text>
<text x="878.66" y="239.20" font-size="9.5" text-anchor="middle" fill="#000" font-weight="normal" >65</text>
<text x="950.79" y="239.20" font-size="9.5" text-anchor="middle" fill="#000" font-weight="normal" >9.09%</text>
<text x="1095.06" y="239.20" font-size="9.5" text-anchor="middle" fill="#000" font-weight="normal" >0.00%</text>
<text x="1167.20" y="239.20" font-size="9.5" text-anchor="middle" fill="#000" font-weight="normal" >0</text>
<text x="68.41" y="254.38" font-size="9.5" text-anchor="middle" fill="#000" font-weight="normal" >2024-10-20</text>
<text x="140.70" y="254.38" font-size="9.5" text-anchor="middle" fill="#000" font-weight="normal"  stroke="#000" stroke-width="0.12">일</text>
<text x="221.18" y="254.38" font-size="9.5" text-anchor="middle" fill="#000" font-weight="normal" >11,637</text>
<text x="517.98" y="254.38" font-size="9.5" text-anchor="middle" fill="#000" font-weight="normal" >10,579</text>
<text x="734.38" y="254.38" font-size="9.5" text-anchor="middle" fill="#000" font-weight="normal" >700</text>
<text x="806.52" y="254.38" font-size="9.5" text-anchor="middle" fill="#000" font-weight="normal" >100%</text>
<text x="878.66" y="254.38" font-size="9.5" text-anchor="middle" fill="#000" font-weight="normal" >63</text>
<text x="950.79" y="254.38" font-size="9.5" text-anchor="middle" fill="#000" font-weight="normal" >9.00%</text>
<text x="1095.06" y="254.38" font-size="9.5" text-anchor="middle" fill="#000" font-weight="normal" >0.00%</text>
<text x="1167.20" y="254.38" font-size="9.5" text-anchor="middle" fill="#000" font-weight="normal" >0</text>
<text x="68.41" y="269.55" font-size="9.5" text-anchor="middle" fill="#000" font-weight="normal" >2024-10-21</text>
<text x="140.70" y="269.55" font-size="9.5" text-anchor="middle" fill="#000" font-weight="normal"  stroke="#000" stroke-width="0.12">월</text>
<text x="221.18" y="269.55" font-size="9.5" text-anchor="middle" fill="#000" font-weight="normal" >20,104</text>
<text x="517.98" y="269.55" font-size="9.5" text-anchor="middle" fill="#000" font-weight="normal" >18,276</text>
<text x="734.38" y="269.55" font-size="9.5" text-anchor="middle" fill="#000" font-weight="normal" >1,288</text>
<text x="806.52" y="269.55" font-size="9.5" text-anchor="middle" fill="#000" font-weight="normal" >100%</text>
<text x="878.66" y="269.55" font-size="9.5" text-anchor="middle" fill="#000" font-weight="normal" >53</text>
<text x="950.79" y="269.55" font-size="9.5" text-anchor="middle" fill="#000" font-weight="normal" >4.11%</text>
<text x="1022.93" y="269.55" font-size="9.5" text-anchor="middle" fill="#000" font-weight="normal" >3</text>
<text x="1095.06" y="269.55" font-size="9.5" text-anchor="middle" fill="#000" font-weight="normal" >5.66%</text>
<text x="1167.20" y="269.55" font-size="9.5" text-anchor="middle" fill="#000" font-weight="normal" >0</text>
<text x="68.41" y="284.73" font-size="9.5" text-anchor="middle" fill="#000" font-weight="normal" >2024-10-22</text>
<text x="140.70" y="284.73" font-size="9.5" text-anchor="middle" fill="#000" font-weight="normal"  stroke="#000" stroke-width="0.12">화</text>
<text x="221.18" y="284.73" font-size="9.5" text-anchor="middle" fill="#000" font-weight="normal" >30,587</text>
<text x="517.98" y="284.73" font-size="9.5" text-anchor="middle" fill="#000" font-weight="normal" >27,806</text>
<text x="734.38" y="284.73" font-size="9.5" text-anchor="middle" fill="#000" font-weight="normal" >1,352</text>
<text x="806.52" y="284.73" font-size="9.5" text-anchor="middle" fill="#000" font-weight="normal" >100%</text>
<text x="878.66" y="284.73" font-size="9.5" text-anchor="middle" fill="#000" font-weight="normal" >36</text>
<text x="950.79" y="284.73" font-size="9.5" text-anchor="middle" fill="#000" font-weight="normal" >2.66%</text>
<text x="1022.93" y="284.73" font-size="9.5" text-anchor="middle" fill="#000" font-weight="normal" >5</text>
<text x="1095.06" y="284.73" font-size="9.5" text-anchor="middle" fill="#000" font-weight="normal" >13.89%</text>
<text x="1167.20" y="284.73" font-size="9.5" text-anchor="middle" fill="#000" font-weight="normal" >0</text>
<text x="68.41" y="299.90" font-size="9.5" text-anchor="middle" fill="#000" font-weight="normal" >2024-10-23</text>
<text x="140.70" y="299.90" font-size="9.5" text-anchor="middle" fill="#000" font-weight="normal"  stroke="#000" stroke-width="0.12">수</text>
<text x="221.18" y="299.90" font-size="9.5" text-anchor="middle" fill="#000" font-weight="normal" >45,207</text>
<text x="517.98" y="299.90" font-size="9.5" text-anchor="middle" fill="#000" font-weight="normal" >41,097</text>
<text x="734.38" y="299.90" font-size="9.5" text-anchor="middle" fill="#000" font-weight="normal" >3,570</text>
<text x="806.52" y="299.90" font-size="9.5" text-anchor="middle" fill="#000" font-weight="normal" >100%</text>
<text x="878.66" y="299.90" font-size="9.5" text-anchor="middle" fill="#000" font-weight="normal" >176</text>
<text x="950.79" y="299.90" font-size="9.5" text-anchor="middle" fill="#000" font-weight="normal" >4.93%</text>
<text x="1022.93" y="299.90" font-size="9.5" text-anchor="middle" fill="#000" font-weight="normal" >1</text>
<text x="1095.06" y="299.90" font-size="9.5" text-anchor="middle" fill="#000" font-weight="normal" >0.57%</text>
<text x="1167.20" y="299.90" font-size="9.5" text-anchor="middle" fill="#000" font-weight="normal" >0</text>
<text x="68.41" y="315.07" font-size="9.5" text-anchor="middle" fill="#000" font-weight="normal" >2024-10-24</text>
<text x="140.70" y="315.07" font-size="9.5" text-anchor="middle" fill="#000" font-weight="normal"  stroke="#000" stroke-width="0.12">목</text>
<text x="221.18" y="315.07" font-size="9.5" text-anchor="middle" fill="#000" font-weight="normal" >22,498</text>
<text x="517.98" y="315.07" font-size="9.5" text-anchor="middle" fill="#000" font-weight="normal" >20,453</text>
<text x="734.38" y="315.07" font-size="9.5" text-anchor="middle" fill="#000" font-weight="normal" >1,748</text>
<text x="806.52" y="315.07" font-size="9.5" text-anchor="middle" fill="#000" font-weight="normal" >100%</text>
<text x="878.66" y="315.07" font-size="9.5" text-anchor="middle" fill="#000" font-weight="normal" >75</text>
<text x="950.79" y="315.07" font-size="9.5" text-anchor="middle" fill="#000" font-weight="normal" >4.29%</text>
<text x="1022.93" y="315.07" font-size="9.5" text-anchor="middle" fill="#000" font-weight="normal" >1</text>
<text x="1095.06" y="315.07" font-size="9.5" text-anchor="middle" fill="#000" font-weight="normal" >1.33%</text>
<text x="1167.20" y="315.07" font-size="9.5" text-anchor="middle" fill="#000" font-weight="normal" >0</text>
<text x="68.41" y="330.25" font-size="9.5" text-anchor="middle" fill="#000" font-weight="normal" >2024-10-25</text>
<text x="140.70" y="330.25" font-size="9.5" text-anchor="middle" fill="#000" font-weight="normal"  stroke="#000" stroke-width="0.12">금</text>
<text x="221.18" y="330.25" font-size="9.5" text-anchor="middle" fill="#000" font-weight="normal" >21,563</text>
<text x="517.98" y="330.25" font-size="9.5" text-anchor="middle" fill="#000" font-weight="normal" >19,603</text>
<text x="734.38" y="330.25" font-size="9.5" text-anchor="middle" fill="#000" font-weight="normal" >1,258</text>
<text x="806.52" y="330.25" font-size="9.5" text-anchor="middle" fill="#000" font-weight="normal" >100%</text>
<text x="878.66" y="330.25" font-size="9.5" text-anchor="middle" fill="#000" font-weight="normal" >91</text>
<text x="950.79" y="330.25" font-size="9.5" text-anchor="middle" fill="#000" font-weight="normal" >7.23%</text>
<text x="1022.93" y="330.25" font-size="9.5" text-anchor="middle" fill="#000" font-weight="normal" >2</text>
<text x="1095.06" y="330.25" font-size="9.5" text-anchor="middle" fill="#000" font-weight="normal" >2.20%</text>
<text x="1167.20" y="330.25" font-size="9.5" text-anchor="middle" fill="#000" font-weight="normal" >0</text>
<text x="68.41" y="345.43" font-size="9.5" text-anchor="middle" fill="#000" font-weight="normal" >2024-10-26</text>
<text x="140.70" y="345.43" font-size="9.5" text-anchor="middle" fill="#000" font-weight="normal"  stroke="#000" stroke-width="0.12">토</text>
<text x="221.18" y="345.43" font-size="9.5" text-anchor="middle" fill="#000" font-weight="normal" >7,787</text>
<text x="517.98" y="345.43" font-size="9.5" text-anchor="middle" fill="#000" font-weight="normal" >7,079</text>
<text x="734.38" y="345.43" font-size="9.5" text-anchor="middle" fill="#000" font-weight="normal" >523</text>
<text x="806.52" y="345.43" font-size="9.5" text-anchor="middle" fill="#000" font-weight="normal" >100%</text>
<text x="878.66" y="345.43" font-size="9.5" text-anchor="middle" fill="#000" font-weight="normal" >30</text>
<text x="950.79" y="345.43" font-size="9.5" text-anchor="middle" fill="#000" font-weight="normal" >5.74%</text>
<text x="1022.93" y="345.43" font-size="9.5" text-anchor="middle" fill="#000" font-weight="normal" >1</text>
<text x="1095.06" y="345.43" font-size="9.5" text-anchor="middle" fill="#000" font-weight="normal" >3.33%</text>
<text x="1167.20" y="345.43" font-size="9.5" text-anchor="middle" fill="#000" font-weight="normal" >8</text>
<text x="68.41" y="360.60" font-size="9.5" text-anchor="middle" fill="#000" font-weight="normal" >2024-10-27</text>
<text x="140.70" y="360.60" font-size="9.5" text-anchor="middle" fill="#000" font-weight="normal"  stroke="#000" stroke-width="0.12">일</text>
<text x="221.18" y="360.60" font-size="9.5" text-anchor="middle" fill="#000" font-weight="normal" >5,828</text>
<text x="517.98" y="360.60" font-size="9.5" text-anchor="middle" fill="#000" font-weight="normal" >5,298</text>
<text x="734.38" y="360.60" font-size="9.5" text-anchor="middle" fill="#000" font-weight="normal" >402</text>
<text x="806.52" y="360.60" font-size="9.5" text-anchor="middle" fill="#000" font-weight="normal" >100%</text>
<text x="878.66" y="360.60" font-size="9.5" text-anchor="middle" fill="#000" font-weight="normal" >31</text>
<text x="950.79" y="360.60" font-size="9.5" text-anchor="middle" fill="#000" font-weight="normal" >7.71%</text>
<text x="1095.06" y="360.60" font-size="9.5" text-anchor="middle" fill="#000" font-weight="normal" >0.00%</text>
<text x="1167.20" y="360.60" font-size="9.5" text-anchor="middle" fill="#000" font-weight="normal" >0</text>
<text x="68.41" y="375.78" font-size="9.5" text-anchor="middle" fill="#000" font-weight="normal" >2024-10-28</text>
<text x="140.70" y="375.78" font-size="9.5" text-anchor="middle" fill="#000" font-weight="normal"  stroke="#000" stroke-width="0.12">월</text>
<text x="221.18" y="375.78" font-size="9.5" text-anchor="middle" fill="#000" font-weight="normal" >5,729</text>
<text x="517.98" y="375.78" font-size="9.5" text-anchor="middle" fill="#000" font-weight="normal" >5,208</text>
<text x="734.38" y="375.78" font-size="9.5" text-anchor="middle" fill="#000" font-weight="normal" >397</text>
<text x="806.52" y="375.78" font-size="9.5" text-anchor="middle" fill="#000" font-weight="normal" >100%</text>
<text x="878.66" y="375.78" font-size="9.5" text-anchor="middle" fill="#000" font-weight="normal" >27</text>
<text x="950.79" y="375.78" font-size="9.5" text-anchor="middle" fill="#000" font-weight="normal" >6.80%</text>
<text x="1095.06" y="375.78" font-size="9.5" text-anchor="middle" fill="#000" font-weight="normal" >0.00%</text>
<text x="1167.20" y="375.78" font-size="9.5" text-anchor="middle" fill="#000" font-weight="normal" >0</text>
<text x="68.41" y="390.95" font-size="9.5" text-anchor="middle" fill="#000" font-weight="normal" >2024-10-29</text>
<text x="140.70" y="390.95" font-size="9.5" text-anchor="middle" fill="#000" font-weight="normal"  stroke="#000" stroke-width="0.12">화</text>
<text x="221.18" y="390.95" font-size="9.5" text-anchor="middle" fill="#000" font-weight="normal" >5,597</text>
<text x="517.98" y="390.95" font-size="9.5" text-anchor="middle" fill="#000" font-weight="normal" >5,088</text>
<text x="734.38" y="390.95" font-size="9.5" text-anchor="middle" fill="#000" font-weight="normal" >340</text>
<text x="806.52" y="390.95" font-size="9.5" text-anchor="middle" fill="#000" font-weight="normal" >100%</text>
<text x="878.66" y="390.95" font-size="9.5" text-anchor="middle" fill="#000" font-weight="normal" >25</text>
<text x="950.79" y="390.95" font-size="9.5" text-anchor="middle" fill="#000" font-weight="normal" >7.35%</text>
<text x="1095.06" y="390.95" font-size="9.5" text-anchor="middle" fill="#000" font-weight="normal" >0.00%</text>
<text x="1167.20" y="390.95" font-size="9.5" text-anchor="middle" fill="#000" font-weight="normal" >0</text>
<text x="68.41" y="406.12" font-size="9.5" text-anchor="middle" fill="#000" font-weight="normal" >2024-10-30</text>
<text x="140.70" y="406.12" font-size="9.5" text-anchor="middle" fill="#000" font-weight="normal"  stroke="#000" stroke-width="0.12">수</text>
<text x="221.18" y="406.12" font-size="9.5" text-anchor="middle" fill="#000" font-weight="normal" >6,075</text>
<text x="517.98" y="406.12" font-size="9.5" text-anchor="middle" fill="#000" font-weight="normal" >5,523</text>
<text x="734.38" y="406.12" font-size="9.5" text-anchor="middle" fill="#000" font-weight="normal" >332</text>
<text x="806.52" y="406.12" font-size="9.5" text-anchor="middle" fill="#000" font-weight="normal" >100%</text>
<text x="878.66" y="406.12" font-size="9.5" text-anchor="middle" fill="#000" font-weight="normal" >25</text>
<text x="950.79" y="406.12" font-size="9.5" text-anchor="middle" fill="#000" font-weight="normal" >7.53%</text>
<text x="1095.06" y="406.12" font-size="9.5" text-anchor="middle" fill="#000" font-weight="normal" >0.00%</text>
<text x="1167.20" y="406.12" font-size="9.5" text-anchor="middle" fill="#000" font-weight="normal" >0</text>
<text x="68.41" y="421.30" font-size="9.5" text-anchor="middle" fill="#000" font-weight="normal" >2024-10-31</text>
<text x="140.70" y="421.30" font-size="9.5" text-anchor="middle" fill="#000" font-weight="normal"  stroke="#000" stroke-width="0.12">목</text>
<text x="221.18" y="421.30" font-size="9.5" text-anchor="middle" fill="#000" font-weight="normal" >3,073</text>
<text x="517.98" y="421.30" font-size="9.5" text-anchor="middle" fill="#000" font-weight="normal" >2,794</text>
<text x="734.38" y="421.30" font-size="9.5" text-anchor="middle" fill="#000" font-weight="normal" >165</text>
<text x="806.52" y="421.30" font-size="9.5" text-anchor="middle" fill="#000" font-weight="normal" >100%</text>
<text x="878.66" y="421.30" font-size="9.5" text-anchor="middle" fill="#000" font-weight="normal" >6</text>
<text x="950.79" y="421.30" font-size="9.5" text-anchor="middle" fill="#000" font-weight="normal" >3.64%</text>
<text x="1095.06" y="421.30" font-size="9.5" text-anchor="middle" fill="#000" font-weight="normal" >0.00%</text>
<text x="1167.20" y="421.30" font-size="9.5" text-anchor="middle" fill="#000" font-weight="normal" >0</text>
<text x="68.41" y="436.48" font-size="9.5" text-anchor="middle" fill="#000" font-weight="normal" >2024-11-01</text>
<text x="140.70" y="436.48" font-size="9.5" text-anchor="middle" fill="#000" font-weight="normal"  stroke="#000" stroke-width="0.12">금</text>
<text x="221.18" y="436.48" font-size="9.5" text-anchor="middle" fill="#000" font-weight="normal" >3,991</text>
<text x="517.98" y="436.48" font-size="9.5" text-anchor="middle" fill="#000" font-weight="normal" >3,628</text>
<text x="734.38" y="436.48" font-size="9.5" text-anchor="middle" fill="#000" font-weight="normal" >368</text>
<text x="806.52" y="436.48" font-size="9.5" text-anchor="middle" fill="#000" font-weight="normal" >100%</text>
<text x="878.66" y="436.48" font-size="9.5" text-anchor="middle" fill="#000" font-weight="normal" >3</text>
<text x="950.79" y="436.48" font-size="9.5" text-anchor="middle" fill="#000" font-weight="normal" >0.82%</text>
<text x="1095.06" y="436.48" font-size="9.5" text-anchor="middle" fill="#000" font-weight="normal" >0.00%</text>
<text x="1167.20" y="436.48" font-size="9.5" text-anchor="middle" fill="#000" font-weight="normal" >0</text>
<text x="68.41" y="451.65" font-size="9.5" text-anchor="middle" fill="#000" font-weight="normal" >2024-11-02</text>
<text x="140.70" y="451.65" font-size="9.5" text-anchor="middle" fill="#000" font-weight="normal"  stroke="#000" stroke-width="0.12">토</text>
<text x="221.18" y="451.65" font-size="9.5" text-anchor="middle" fill="#000" font-weight="normal" >10,110</text>
<text x="517.98" y="451.65" font-size="9.5" text-anchor="middle" fill="#000" font-weight="normal" >9,191</text>
<text x="734.38" y="451.65" font-size="9.5" text-anchor="middle" fill="#000" font-weight="normal" >827</text>
<text x="806.52" y="451.65" font-size="9.5" text-anchor="middle" fill="#000" font-weight="normal" >100%</text>
<text x="878.66" y="451.65" font-size="9.5" text-anchor="middle" fill="#000" font-weight="normal" >89</text>
<text x="950.79" y="451.65" font-size="9.5" text-anchor="middle" fill="#000" font-weight="normal" >10.76%</text>
<text x="1022.93" y="451.65" font-size="9.5" text-anchor="middle" fill="#000" font-weight="normal" >1</text>
<text x="1095.06" y="451.65" font-size="9.5" text-anchor="middle" fill="#000" font-weight="normal" >1.12%</text>
<text x="1167.20" y="451.65" font-size="9.5" text-anchor="middle" fill="#000" font-weight="normal" >0</text>
<text x="68.41" y="466.83" font-size="9.5" text-anchor="middle" fill="#000" font-weight="normal" >2024-11-03</text>
<text x="140.70" y="466.83" font-size="9.5" text-anchor="middle" fill="#000" font-weight="normal"  stroke="#000" stroke-width="0.12">일</text>
<text x="221.18" y="466.83" font-size="9.5" text-anchor="middle" fill="#000" font-weight="normal" >16,979</text>
<text x="517.98" y="466.83" font-size="9.5" text-anchor="middle" fill="#000" font-weight="normal" >15,435</text>
<text x="734.38" y="466.83" font-size="9.5" text-anchor="middle" fill="#000" font-weight="normal" >1,947</text>
<text x="806.52" y="466.83" font-size="9.5" text-anchor="middle" fill="#000" font-weight="normal" >100%</text>
<text x="878.66" y="466.83" font-size="9.5" text-anchor="middle" fill="#000" font-weight="normal" >169</text>
<text x="950.79" y="466.83" font-size="9.5" text-anchor="middle" fill="#000" font-weight="normal" >8.68%</text>
<text x="1095.06" y="466.83" font-size="9.5" text-anchor="middle" fill="#000" font-weight="normal" >0.00%</text>
<text x="1167.20" y="466.83" font-size="9.5" text-anchor="middle" fill="#000" font-weight="normal" >0</text>
<text x="68.41" y="482.00" font-size="9.5" text-anchor="middle" fill="#000" font-weight="normal" >2024-11-04</text>
<text x="140.70" y="482.00" font-size="9.5" text-anchor="middle" fill="#000" font-weight="normal"  stroke="#000" stroke-width="0.12">월</text>
<text x="221.18" y="482.00" font-size="9.5" text-anchor="middle" fill="#000" font-weight="normal" >10,699</text>
<text x="517.98" y="482.00" font-size="9.5" text-anchor="middle" fill="#000" font-weight="normal" >9,726</text>
<text x="734.38" y="482.00" font-size="9.5" text-anchor="middle" fill="#000" font-weight="normal" >1,170</text>
<text x="806.52" y="482.00" font-size="9.5" text-anchor="middle" fill="#000" font-weight="normal" >100%</text>
<text x="878.66" y="482.00" font-size="9.5" text-anchor="middle" fill="#000" font-weight="normal" >85</text>
<text x="950.79" y="482.00" font-size="9.5" text-anchor="middle" fill="#000" font-weight="normal" >7.26%</text>
<text x="1022.93" y="482.00" font-size="9.5" text-anchor="middle" fill="#000" font-weight="normal" >2</text>
<text x="1095.06" y="482.00" font-size="9.5" text-anchor="middle" fill="#000" font-weight="normal" >2.35%</text>
<text x="1167.20" y="482.00" font-size="9.5" text-anchor="middle" fill="#000" font-weight="normal" >0</text>
<text x="68.41" y="497.18" font-size="9.5" text-anchor="middle" fill="#000" font-weight="normal" >2024-11-05</text>
<text x="140.70" y="497.18" font-size="9.5" text-anchor="middle" fill="#000" font-weight="normal"  stroke="#000" stroke-width="0.12">화</text>
<text x="221.18" y="497.18" font-size="9.5" text-anchor="middle" fill="#000" font-weight="normal" >11,579</text>
<text x="517.98" y="497.18" font-size="9.5" text-anchor="middle" fill="#000" font-weight="normal" >10,526</text>
<text x="734.38" y="497.18" font-size="9.5" text-anchor="middle" fill="#000" font-weight="normal" >1,207</text>
<text x="806.52" y="497.18" font-size="9.5" text-anchor="middle" fill="#000" font-weight="normal" >100%</text>
<text x="878.66" y="497.18" font-size="9.5" text-anchor="middle" fill="#000" font-weight="normal" >85</text>
<text x="950.79" y="497.18" font-size="9.5" text-anchor="middle" fill="#000" font-weight="normal" >7.04%</text>
<text x="1095.06" y="497.18" font-size="9.5" text-anchor="middle" fill="#000" font-weight="normal" >0.00%</text>
<text x="1167.20" y="497.18" font-size="9.5" text-anchor="middle" fill="#000" font-weight="normal" >0</text>
<text x="68.41" y="512.35" font-size="9.5" text-anchor="middle" fill="#000" font-weight="normal" >2024-11-06</text>
<text x="140.70" y="512.35" font-size="9.5" text-anchor="middle" fill="#000" font-weight="normal"  stroke="#000" stroke-width="0.12">수</text>
<text x="221.18" y="512.35" font-size="9.5" text-anchor="middle" fill="#000" font-weight="normal" >24,937</text>
<text x="517.98" y="512.35" font-size="9.5" text-anchor="middle" fill="#000" font-weight="normal" >22,670</text>
<text x="734.38" y="512.35" font-size="9.5" text-anchor="middle" fill="#000" font-weight="normal" >1,623</text>
<text x="806.52" y="512.35" font-size="9.5" text-anchor="middle" fill="#000" font-weight="normal" >100%</text>
<text x="878.66" y="512.35" font-size="9.5" text-anchor="middle" fill="#000" font-weight="normal" >95</text>
<text x="950.79" y="512.35" font-size="9.5" text-anchor="middle" fill="#000" font-weight="normal" >5.85%</text>
<text x="1095.06" y="512.35" font-size="9.5" text-anchor="middle" fill="#000" font-weight="normal" >0.00%</text>
<text x="1167.20" y="512.35" font-size="9.5" text-anchor="middle" fill="#000" font-weight="normal" >0</text>
<text x="68.41" y="527.52" font-size="9.5" text-anchor="middle" fill="#000" font-weight="normal" >2024-11-07</text>
<text x="140.70" y="527.52" font-size="9.5" text-anchor="middle" fill="#000" font-weight="normal"  stroke="#000" stroke-width="0.12">목</text>
<text x="221.18" y="527.52" font-size="9.5" text-anchor="middle" fill="#000" font-weight="normal" >46,495</text>
<text x="517.98" y="527.52" font-size="9.5" text-anchor="middle" fill="#000" font-weight="normal" >42,268</text>
<text x="734.38" y="527.52" font-size="9.5" text-anchor="middle" fill="#000" font-weight="normal" >2,571</text>
<text x="806.52" y="527.52" font-size="9.5" text-anchor="middle" fill="#000" font-weight="normal" >100%</text>
<text x="878.66" y="527.52" font-size="9.5" text-anchor="middle" fill="#000" font-weight="normal" >94</text>
<text x="950.79" y="527.52" font-size="9.5" text-anchor="middle" fill="#000" font-weight="normal" >3.66%</text>
<text x="1022.93" y="527.52" font-size="9.5" text-anchor="middle" fill="#000" font-weight="normal" >1</text>
<text x="1095.06" y="527.52" font-size="9.5" text-anchor="middle" fill="#000" font-weight="normal" >1.06%</text>
<text x="1167.20" y="527.52" font-size="9.5" text-anchor="middle" fill="#000" font-weight="normal" >0</text>
<text x="68.41" y="542.70" font-size="9.5" text-anchor="middle" fill="#000" font-weight="normal" >2024-11-08</text>
<text x="140.70" y="542.70" font-size="9.5" text-anchor="middle" fill="#000" font-weight="normal"  stroke="#000" stroke-width="0.12">금</text>
<text x="221.18" y="542.70" font-size="9.5" text-anchor="middle" fill="#000" font-weight="normal" >32,828</text>
<text x="517.98" y="542.70" font-size="9.5" text-anchor="middle" fill="#000" font-weight="normal" >29,844</text>
<text x="734.38" y="542.70" font-size="9.5" text-anchor="middle" fill="#000" font-weight="normal" >3,280</text>
<text x="806.52" y="542.70" font-size="9.5" text-anchor="middle" fill="#000" font-weight="normal" >100%</text>
<text x="878.66" y="542.70" font-size="9.5" text-anchor="middle" fill="#000" font-weight="normal" >133</text>
<text x="950.79" y="542.70" font-size="9.5" text-anchor="middle" fill="#000" font-weight="normal" >4.05%</text>
<text x="1022.93" y="542.70" font-size="9.5" text-anchor="middle" fill="#000" font-weight="normal" >2</text>
<text x="1095.06" y="542.70" font-size="9.5" text-anchor="middle" fill="#000" font-weight="normal" >1.50%</text>
<text x="1167.20" y="542.70" font-size="9.5" text-anchor="middle" fill="#000" font-weight="normal" >0</text>
<text x="68.41" y="557.88" font-size="9.5" text-anchor="middle" fill="#000" font-weight="normal" >2024-11-09</text>
<text x="140.70" y="557.88" font-size="9.5" text-anchor="middle" fill="#000" font-weight="normal"  stroke="#000" stroke-width="0.12">토</text>
<text x="221.18" y="557.88" font-size="9.5" text-anchor="middle" fill="#000" font-weight="normal" >7,783</text>
<text x="517.98" y="557.88" font-size="9.5" text-anchor="middle" fill="#000" font-weight="normal" >7,075</text>
<text x="734.38" y="557.88" font-size="9.5" text-anchor="middle" fill="#000" font-weight="normal" >759</text>
<text x="806.52" y="557.88" font-size="9.5" text-anchor="middle" fill="#000" font-weight="normal" >100%</text>
<text x="878.66" y="557.88" font-size="9.5" text-anchor="middle" fill="#000" font-weight="normal" >53</text>
<text x="950.79" y="557.88" font-size="9.5" text-anchor="middle" fill="#000" font-weight="normal" >6.98%</text>
<text x="1095.06" y="557.88" font-size="9.5" text-anchor="middle" fill="#000" font-weight="normal" >0.00%</text>
<text x="1167.20" y="557.88" font-size="9.5" text-anchor="middle" fill="#000" font-weight="normal" >0</text>
<text x="68.41" y="573.05" font-size="9.5" text-anchor="middle" fill="#000" font-weight="normal" >2024-11-10</text>
<text x="140.70" y="573.05" font-size="9.5" text-anchor="middle" fill="#000" font-weight="normal"  stroke="#000" stroke-width="0.12">일</text>
<text x="221.18" y="573.05" font-size="9.5" text-anchor="middle" fill="#000" font-weight="normal" >6,273</text>
<text x="517.98" y="573.05" font-size="9.5" text-anchor="middle" fill="#000" font-weight="normal" >5,703</text>
<text x="734.38" y="573.05" font-size="9.5" text-anchor="middle" fill="#000" font-weight="normal" >709</text>
<text x="806.52" y="573.05" font-size="9.5" text-anchor="middle" fill="#000" font-weight="normal" >100%</text>
<text x="878.66" y="573.05" font-size="9.5" text-anchor="middle" fill="#000" font-weight="normal" >46</text>
<text x="950.79" y="573.05" font-size="9.5" text-anchor="middle" fill="#000" font-weight="normal" >6.49%</text>
<text x="1095.06" y="573.05" font-size="9.5" text-anchor="middle" fill="#000" font-weight="normal" >0.00%</text>
<text x="1167.20" y="573.05" font-size="9.5" text-anchor="middle" fill="#000" font-weight="normal" >0</text>
<text x="68.41" y="588.22" font-size="9.5" text-anchor="middle" fill="#000" font-weight="normal" >2024-11-11</text>
<text x="140.70" y="588.22" font-size="9.5" text-anchor="middle" fill="#000" font-weight="normal"  stroke="#000" stroke-width="0.12">월</text>
<text x="221.18" y="588.22" font-size="9.5" text-anchor="middle" fill="#000" font-weight="normal" >7,967</text>
<text x="517.98" y="588.22" font-size="9.5" text-anchor="middle" fill="#000" font-weight="normal" >7,243</text>
<text x="734.38" y="588.22" font-size="9.5" text-anchor="middle" fill="#000" font-weight="normal" >837</text>
<text x="806.52" y="588.22" font-size="9.5" text-anchor="middle" fill="#000" font-weight="normal" >100%</text>
<text x="878.66" y="588.22" font-size="9.5" text-anchor="middle" fill="#000" font-weight="normal" >67</text>
<text x="950.79" y="588.22" font-size="9.5" text-anchor="middle" fill="#000" font-weight="normal" >8.00%</text>
<text x="1095.06" y="588.22" font-size="9.5" text-anchor="middle" fill="#000" font-weight="normal" >0.00%</text>
<text x="1167.20" y="588.22" font-size="9.5" text-anchor="middle" fill="#000" font-weight="normal" >0</text>
<text x="68.41" y="603.40" font-size="9.5" text-anchor="middle" fill="#000" font-weight="normal" >2024-11-12</text>
<text x="140.70" y="603.40" font-size="9.5" text-anchor="middle" fill="#000" font-weight="normal"  stroke="#000" stroke-width="0.12">화</text>
<text x="221.18" y="603.40" font-size="9.5" text-anchor="middle" fill="#000" font-weight="normal" >52,209</text>
<text x="517.98" y="603.40" font-size="9.5" text-anchor="middle" fill="#000" font-weight="normal" >47,463</text>
<text x="734.38" y="603.40" font-size="9.5" text-anchor="middle" fill="#000" font-weight="normal" >8,382</text>
<text x="806.52" y="603.40" font-size="9.5" text-anchor="middle" fill="#000" font-weight="normal" >100%</text>
<text x="878.66" y="603.40" font-size="9.5" text-anchor="middle" fill="#000" font-weight="normal" >748</text>
<text x="950.79" y="603.40" font-size="9.5" text-anchor="middle" fill="#000" font-weight="normal" >8.92%</text>
<text x="1022.93" y="603.40" font-size="9.5" text-anchor="middle" fill="#000" font-weight="normal" >4</text>
<text x="1095.06" y="603.40" font-size="9.5" text-anchor="middle" fill="#000" font-weight="normal" >0.53%</text>
<text x="1167.20" y="603.40" font-size="9.5" text-anchor="middle" fill="#000" font-weight="normal" >0</text>
<text x="68.41" y="618.58" font-size="9.5" text-anchor="middle" fill="#000" font-weight="normal" >2024-11-13</text>
<text x="140.70" y="618.58" font-size="9.5" text-anchor="middle" fill="#000" font-weight="normal"  stroke="#000" stroke-width="0.12">수</text>
<text x="221.18" y="618.58" font-size="9.5" text-anchor="middle" fill="#000" font-weight="normal" >36,433</text>
<text x="517.98" y="618.58" font-size="9.5" text-anchor="middle" fill="#000" font-weight="normal" >33,121</text>
<text x="734.38" y="618.58" font-size="9.5" text-anchor="middle" fill="#000" font-weight="normal" >6,136</text>
<text x="806.52" y="618.58" font-size="9.5" text-anchor="middle" fill="#000" font-weight="normal" >100%</text>
<text x="878.66" y="618.58" font-size="9.5" text-anchor="middle" fill="#000" font-weight="normal" >563</text>
<text x="950.79" y="618.58" font-size="9.5" text-anchor="middle" fill="#000" font-weight="normal" >9.18%</text>
<text x="1022.93" y="618.58" font-size="9.5" text-anchor="middle" fill="#000" font-weight="normal" >2</text>
<text x="1095.06" y="618.58" font-size="9.5" text-anchor="middle" fill="#000" font-weight="normal" >0.36%</text>
<text x="1167.20" y="618.58" font-size="9.5" text-anchor="middle" fill="#000" font-weight="normal" >0</text>
<text x="68.41" y="633.75" font-size="9.5" text-anchor="middle" fill="#000" font-weight="normal" >2024-11-14</text>
<text x="140.70" y="633.75" font-size="9.5" text-anchor="middle" fill="#000" font-weight="normal"  stroke="#000" stroke-width="0.12">목</text>
<text x="221.18" y="633.75" font-size="9.5" text-anchor="middle" fill="#000" font-weight="normal" >10,712</text>
<text x="517.98" y="633.75" font-size="9.5" text-anchor="middle" fill="#000" font-weight="normal" >9,738</text>
<text x="734.38" y="633.75" font-size="9.5" text-anchor="middle" fill="#000" font-weight="normal" >1,802</text>
<text x="806.52" y="633.75" font-size="9.5" text-anchor="middle" fill="#000" font-weight="normal" >100%</text>
<text x="878.66" y="633.75" font-size="9.5" text-anchor="middle" fill="#000" font-weight="normal" >141</text>
<text x="950.79" y="633.75" font-size="9.5" text-anchor="middle" fill="#000" font-weight="normal" >7.82%</text>
<text x="1022.93" y="633.75" font-size="9.5" text-anchor="middle" fill="#000" font-weight="normal" >1</text>
<text x="1095.06" y="633.75" font-size="9.5" text-anchor="middle" fill="#000" font-weight="normal" >0.71%</text>
<text x="1167.20" y="633.75" font-size="9.5" text-anchor="middle" fill="#000" font-weight="normal" >0</text>
<text x="68.41" y="648.92" font-size="9.5" text-anchor="middle" fill="#000" font-weight="normal" >2024-11-15</text>
<text x="140.70" y="648.92" font-size="9.5" text-anchor="middle" fill="#000" font-weight="normal"  stroke="#000" stroke-width="0.12">금</text>
<text x="221.18" y="648.92" font-size="9.5" text-anchor="middle" fill="#000" font-weight="normal" >5,268</text>
<text x="517.98" y="648.92" font-size="9.5" text-anchor="middle" fill="#000" font-weight="normal" >4,789</text>
<text x="734.38" y="648.92" font-size="9.5" text-anchor="middle" fill="#000" font-weight="normal" >871</text>
<text x="806.52" y="648.92" font-size="9.5" text-anchor="middle" fill="#000" font-weight="normal" >100%</text>
<text x="878.66" y="648.92" font-size="9.5" text-anchor="middle" fill="#000" font-weight="normal" >97</text>
<text x="950.79" y="648.92" font-size="9.5" text-anchor="middle" fill="#000" font-weight="normal" >11.14%</text>
<text x="1095.06" y="648.92" font-size="9.5" text-anchor="middle" fill="#000" font-weight="normal" >0.00%</text>
<text x="1167.20" y="648.92" font-size="9.5" text-anchor="middle" fill="#000" font-weight="normal" >0</text>
<text x="68.41" y="664.10" font-size="9.5" text-anchor="middle" fill="#000" font-weight="normal" >2024-11-16</text>
<text x="140.70" y="664.10" font-size="9.5" text-anchor="middle" fill="#000" font-weight="normal"  stroke="#000" stroke-width="0.12">토</text>
<text x="221.18" y="664.10" font-size="9.5" text-anchor="middle" fill="#000" font-weight="normal" >5,174</text>
<text x="517.98" y="664.10" font-size="9.5" text-anchor="middle" fill="#000" font-weight="normal" >4,704</text>
<text x="734.38" y="664.10" font-size="9.5" text-anchor="middle" fill="#000" font-weight="normal" >885</text>
<text x="806.52" y="664.10" font-size="9.5" text-anchor="middle" fill="#000" font-weight="normal" >100%</text>
<text x="878.66" y="664.10" font-size="9.5" text-anchor="middle" fill="#000" font-weight="normal" >75</text>
<text x="950.79" y="664.10" font-size="9.5" text-anchor="middle" fill="#000" font-weight="normal" >8.47%</text>
<text x="1095.06" y="664.10" font-size="9.5" text-anchor="middle" fill="#000" font-weight="normal" >0.00%</text>
<text x="1167.20" y="664.10" font-size="9.5" text-anchor="middle" fill="#000" font-weight="normal" >8</text>
<text x="68.41" y="679.27" font-size="9.5" text-anchor="middle" fill="#000" font-weight="normal" >2024-11-17</text>
<text x="140.70" y="679.27" font-size="9.5" text-anchor="middle" fill="#000" font-weight="normal"  stroke="#000" stroke-width="0.12">일</text>
<text x="221.18" y="679.27" font-size="9.5" text-anchor="middle" fill="#000" font-weight="normal" >6,146</text>
<text x="517.98" y="679.27" font-size="9.5" text-anchor="middle" fill="#000" font-weight="normal" >5,587</text>
<text x="734.38" y="679.27" font-size="9.5" text-anchor="middle" fill="#000" font-weight="normal" >912</text>
<text x="806.52" y="679.27" font-size="9.5" text-anchor="middle" fill="#000" font-weight="normal" >100%</text>
<text x="878.66" y="679.27" font-size="9.5" text-anchor="middle" fill="#000" font-weight="normal" >97</text>
<text x="950.79" y="679.27" font-size="9.5" text-anchor="middle" fill="#000" font-weight="normal" >10.64%</text>
<text x="1095.06" y="679.27" font-size="9.5" text-anchor="middle" fill="#000" font-weight="normal" >0.00%</text>
<text x="1167.20" y="679.27" font-size="9.5" text-anchor="middle" fill="#000" font-weight="normal" >0</text>
<text x="68.41" y="694.45" font-size="9.5" text-anchor="middle" fill="#000" font-weight="normal" >2024-11-18</text>
<text x="140.70" y="694.45" font-size="9.5" text-anchor="middle" fill="#000" font-weight="normal"  stroke="#000" stroke-width="0.12">월</text>
<text x="221.18" y="694.45" font-size="9.5" text-anchor="middle" fill="#000" font-weight="normal" >5,559</text>
<text x="517.98" y="694.45" font-size="9.5" text-anchor="middle" fill="#000" font-weight="normal" >5,054</text>
<text x="734.38" y="694.45" font-size="9.5" text-anchor="middle" fill="#000" font-weight="normal" >862</text>
<text x="806.52" y="694.45" font-size="9.5" text-anchor="middle" fill="#000" font-weight="normal" >100%</text>
<text x="878.66" y="694.45" font-size="9.5" text-anchor="middle" fill="#000" font-weight="normal" >86</text>
<text x="950.79" y="694.45" font-size="9.5" text-anchor="middle" fill="#000" font-weight="normal" >9.98%</text>
<text x="1095.06" y="694.45" font-size="9.5" text-anchor="middle" fill="#000" font-weight="normal" >0.00%</text>
<text x="1167.20" y="694.45" font-size="9.5" text-anchor="middle" fill="#000" font-weight="normal" >0</text>
<text x="68.41" y="709.62" font-size="9.5" text-anchor="middle" fill="#000" font-weight="normal" >2024-11-19</text>
<text x="140.70" y="709.62" font-size="9.5" text-anchor="middle" fill="#000" font-weight="normal"  stroke="#000" stroke-width="0.12">화</text>
<text x="221.18" y="709.62" font-size="9.5" text-anchor="middle" fill="#000" font-weight="normal" >5,521</text>
<text x="517.98" y="709.62" font-size="9.5" text-anchor="middle" fill="#000" font-weight="normal" >5,019</text>
<text x="734.38" y="709.62" font-size="9.5" text-anchor="middle" fill="#000" font-weight="normal" >811</text>
<text x="806.52" y="709.62" font-size="9.5" text-anchor="middle" fill="#000" font-weight="normal" >100%</text>
<text x="878.66" y="709.62" font-size="9.5" text-anchor="middle" fill="#000" font-weight="normal" >81</text>
<text x="950.79" y="709.62" font-size="9.5" text-anchor="middle" fill="#000" font-weight="normal" >9.99%</text>
<text x="1022.93" y="709.62" font-size="9.5" text-anchor="middle" fill="#000" font-weight="normal" >2</text>
<text x="1095.06" y="709.62" font-size="9.5" text-anchor="middle" fill="#000" font-weight="normal" >2.47%</text>
<text x="1167.20" y="709.62" font-size="9.5" text-anchor="middle" fill="#000" font-weight="normal" >0</text>
<text x="68.41" y="724.80" font-size="9.5" text-anchor="middle" fill="#000" font-weight="normal" >2024-11-20</text>
<text x="140.70" y="724.80" font-size="9.5" text-anchor="middle" fill="#000" font-weight="normal"  stroke="#000" stroke-width="0.12">수</text>
<text x="221.18" y="724.80" font-size="9.5" text-anchor="middle" fill="#000" font-weight="normal" >69</text>
<text x="517.98" y="724.80" font-size="9.5" text-anchor="middle" fill="#000" font-weight="normal" >63</text>
<text x="734.38" y="724.80" font-size="9.5" text-anchor="middle" fill="#000" font-weight="normal" >8</text>
<text x="806.52" y="724.80" font-size="9.5" text-anchor="middle" fill="#000" font-weight="normal" >100%</text>
<text x="878.66" y="724.80" font-size="9.5" text-anchor="middle" fill="#000" font-weight="normal" >1</text>
<text x="950.79" y="724.80" font-size="9.5" text-anchor="middle" fill="#000" font-weight="normal" >12.50%</text>
<text x="1095.06" y="724.80" font-size="9.5" text-anchor="middle" fill="#000" font-weight="normal" >0.00%</text>
<text x="1167.20" y="724.80" font-size="9.5" text-anchor="middle" fill="#000" font-weight="normal" >0</text>
<text x="68.41" y="739.98" font-size="9.5" text-anchor="middle" fill="#000" font-weight="normal" >2024-11-21</text>
<text x="140.70" y="739.98" font-size="9.5" text-anchor="middle" fill="#000" font-weight="normal"  stroke="#000" stroke-width="0.12">목</text>
<text x="221.18" y="739.98" font-size="9.5" text-anchor="middle" fill="#000" font-weight="normal" >0</text>
<text x="517.98" y="739.98" font-size="9.5" text-anchor="middle" fill="#000" font-weight="normal" >0</text>
<text x="734.38" y="739.98" font-size="9.5" text-anchor="middle" fill="#000" font-weight="normal" >0</text>
<text x="878.66" y="739.98" font-size="9.5" text-anchor="middle" fill="#000" font-weight="normal" >0</text>
<text x="1022.93" y="739.98" font-size="9.5" text-anchor="middle" fill="#000" font-weight="normal" >1</text>
<text x="1167.20" y="739.98" font-size="9.5" text-anchor="middle" fill="#000" font-weight="normal" >0</text>
<text x="68.41" y="755.15" font-size="9.5" text-anchor="middle" fill="#000" font-weight="normal" >2024-11-22</text>
<text x="140.70" y="755.15" font-size="9.5" text-anchor="middle" fill="#000" font-weight="normal"  stroke="#000" stroke-width="0.12">금</text>
<text x="221.18" y="755.15" font-size="9.5" text-anchor="middle" fill="#000" font-weight="normal" >0</text>
<text x="517.98" y="755.15" font-size="9.5" text-anchor="middle" fill="#000" font-weight="normal" >0</text>
<text x="734.38" y="755.15" font-size="9.5" text-anchor="middle" fill="#000" font-weight="normal" >0</text>
<text x="878.66" y="755.15" font-size="9.5" text-anchor="middle" fill="#000" font-weight="normal" >0</text>
<text x="1167.20" y="755.15" font-size="9.5" text-anchor="middle" fill="#000" font-weight="normal" >0</text>
<text x="68.41" y="770.32" font-size="9.5" text-anchor="middle" fill="#000" font-weight="normal" >2024-11-23</text>
<text x="140.70" y="770.32" font-size="9.5" text-anchor="middle" fill="#000" font-weight="normal"  stroke="#000" stroke-width="0.12">토</text>
<text x="221.18" y="770.32" font-size="9.5" text-anchor="middle" fill="#000" font-weight="normal" >0</text>
<text x="517.98" y="770.32" font-size="9.5" text-anchor="middle" fill="#000" font-weight="normal" >0</text>
<text x="734.38" y="770.32" font-size="9.5" text-anchor="middle" fill="#000" font-weight="normal" >0</text>
<text x="878.66" y="770.32" font-size="9.5" text-anchor="middle" fill="#000" font-weight="normal" >0</text>
<text x="1167.20" y="770.32" font-size="9.5" text-anchor="middle" fill="#000" font-weight="normal" >0</text>
<text x="68.41" y="785.50" font-size="9.5" text-anchor="middle" fill="#000" font-weight="normal" >2024-11-24</text>
<text x="140.70" y="785.50" font-size="9.5" text-anchor="middle" fill="#000" font-weight="normal"  stroke="#000" stroke-width="0.12">일</text>
<text x="221.18" y="785.50" font-size="9.5" text-anchor="middle" fill="#000" font-weight="normal" >0</text>
<text x="517.98" y="785.50" font-size="9.5" text-anchor="middle" fill="#000" font-weight="normal" >0</text>
<text x="734.38" y="785.50" font-size="9.5" text-anchor="middle" fill="#000" font-weight="normal" >0</text>
<text x="878.66" y="785.50" font-size="9.5" text-anchor="middle" fill="#000" font-weight="normal" >0</text>
<text x="1167.20" y="785.50" font-size="9.5" text-anchor="middle" fill="#000" font-weight="normal" >0</text>
<text x="68.41" y="800.67" font-size="9.5" text-anchor="middle" fill="#000" font-weight="normal" >2024-11-25</text>
<text x="140.70" y="800.67" font-size="9.5" text-anchor="middle" fill="#000" font-weight="normal"  stroke="#000" stroke-width="0.12">월</text>
<text x="221.18" y="800.67" font-size="9.5" text-anchor="middle" fill="#000" font-weight="normal" >18,272</text>
<text x="517.98" y="800.67" font-size="9.5" text-anchor="middle" fill="#000" font-weight="normal" >16,611</text>
<text x="734.38" y="800.67" font-size="9.5" text-anchor="middle" fill="#000" font-weight="normal" >1,343</text>
<text x="806.52" y="800.67" font-size="9.5" text-anchor="middle" fill="#000" font-weight="normal" >100%</text>
<text x="878.66" y="800.67" font-size="9.5" text-anchor="middle" fill="#000" font-weight="normal" >53</text>
<text x="950.79" y="800.67" font-size="9.5" text-anchor="middle" fill="#000" font-weight="normal" >3.95%</text>
<text x="1022.93" y="800.67" font-size="9.5" text-anchor="middle" fill="#000" font-weight="normal" >2</text>
<text x="1095.06" y="800.67" font-size="9.5" text-anchor="middle" fill="#000" font-weight="normal" >3.77%</text>
<text x="1167.20" y="800.67" font-size="9.5" text-anchor="middle" fill="#000" font-weight="normal" >0</text>
<text x="68.41" y="815.85" font-size="9.5" text-anchor="middle" fill="#000" font-weight="normal" >2024-11-26</text>
<text x="140.70" y="815.85" font-size="9.5" text-anchor="middle" fill="#000" font-weight="normal"  stroke="#000" stroke-width="0.12">화</text>
<text x="221.18" y="815.85" font-size="9.5" text-anchor="middle" fill="#000" font-weight="normal" >23,715</text>
<text x="517.98" y="815.85" font-size="9.5" text-anchor="middle" fill="#000" font-weight="normal" >21,559</text>
<text x="734.38" y="815.85" font-size="9.5" text-anchor="middle" fill="#000" font-weight="normal" >1,636</text>
<text x="806.52" y="815.85" font-size="9.5" text-anchor="middle" fill="#000" font-weight="normal" >100%</text>
<text x="878.66" y="815.85" font-size="9.5" text-anchor="middle" fill="#000" font-weight="normal" >73</text>
<text x="950.79" y="815.85" font-size="9.5" text-anchor="middle" fill="#000" font-weight="normal" >4.46%</text>
<text x="1022.93" y="815.85" font-size="9.5" text-anchor="middle" fill="#000" font-weight="normal" >3</text>
<text x="1095.06" y="815.85" font-size="9.5" text-anchor="middle" fill="#000" font-weight="normal" >4.11%</text>
<text x="1167.20" y="815.85" font-size="9.5" text-anchor="middle" fill="#000" font-weight="normal" >0</text>
<path d="M16.5 14.8 h10.8 l5.9 5.9 v17.2 a1.5 1.5 0 0 1 -1.5 1.5 h-15.2 a1.5 1.5 0 0 1 -1.5 -1.5 v-21.6 a1.5 1.5 0 0 1 1.5 -1.5z" fill="#0fa84c"/>
<path d="M27.3 14.8 l5.9 5.9 h-4.4 a1.5 1.5 0 0 1 -1.5 -1.5z" fill="#0b8a3c"/>
<rect x="18.2" y="24.6" width="11.8" height="8.4" fill="#ffffff"/>
<rect x="19.8" y="26.1" width="3.6" height="2.2" rx=".8" fill="#0fa84c"/><rect x="24.7" y="26.1" width="3.6" height="2.2" rx=".8" fill="#0fa84c"/>
<rect x="19.8" y="29.5" width="3.6" height="2.2" rx=".8" fill="#0fa84c"/><rect x="24.7" y="29.5" width="3.6" height="2.2" rx=".8" fill="#0fa84c"/>
<text x="43.80" y="23.20" font-size="12.6" text-anchor="start" fill="#1f1f1f" font-weight="normal" stroke="#1f1f1f" stroke-width="0.2" textLength="94.5" lengthAdjust="spacingAndGlyphs">마케팅 관리 시트</text>
<path d="M158.25 13.65 L159.63 17.45 L163.67 17.59 L160.48 20.08 L161.60 23.96 L158.25 21.70 L154.90 23.96 L156.02 20.08 L152.83 17.59 L156.87 17.45z" fill="#0b50d0" stroke="#0b50d0" stroke-width="0.5" stroke-linejoin="round"/>
<path d="M176 15.6 h3.6 l1.4 1.3 h5.6 v6.4 h-10.6z" fill="none" stroke="#444746" stroke-width="1.2"/>
<path d="M178.9 20.3 h4.2 M181.6 18.7 l1.6 1.6 -1.6 1.6" fill="none" stroke="#444746" stroke-width="1.1"/>
<path d="M200.8 23.5 a2.6 2.6 0 0 1 -.3 -5.2 a3.9 3.9 0 0 1 7.4 -.9 a3 3 0 0 1 .6 6.1z" fill="none" stroke="#444746" stroke-width="1.2"/>
<path d="M202.3 20.7 l1.6 1.6 2.7 -2.7" fill="none" stroke="#444746" stroke-width="1.1"/>
<text x="43.60" y="41.30" font-size="10.8" text-anchor="start" fill="#1f1f1f" font-weight="normal"  textLength="20.5" lengthAdjust="spacingAndGlyphs" stroke="#1f1f1f" stroke-width="0.12">파일</text>
<text x="75.40" y="41.30" font-size="10.8" text-anchor="start" fill="#1f1f1f" font-weight="normal"  textLength="20.5" lengthAdjust="spacingAndGlyphs" stroke="#1f1f1f" stroke-width="0.12">수정</text>
<text x="106.90" y="41.30" font-size="10.8" text-anchor="start" fill="#1f1f1f" font-weight="normal"  textLength="20.5" lengthAdjust="spacingAndGlyphs" stroke="#1f1f1f" stroke-width="0.12">보기</text>
<text x="138.40" y="41.30" font-size="10.8" text-anchor="start" fill="#1f1f1f" font-weight="normal"  textLength="20.0" lengthAdjust="spacingAndGlyphs" stroke="#1f1f1f" stroke-width="0.12">삽입</text>
<text x="169.60" y="41.30" font-size="10.8" text-anchor="start" fill="#1f1f1f" font-weight="normal"  textLength="20.5" lengthAdjust="spacingAndGlyphs" stroke="#1f1f1f" stroke-width="0.12">서식</text>
<text x="201.60" y="41.30" font-size="10.8" text-anchor="start" fill="#1f1f1f" font-weight="normal"  textLength="29.8" lengthAdjust="spacingAndGlyphs" stroke="#1f1f1f" stroke-width="0.12">데이터</text>
<text x="242.50" y="41.30" font-size="10.8" text-anchor="start" fill="#1f1f1f" font-weight="normal"  textLength="20.7" lengthAdjust="spacingAndGlyphs" stroke="#1f1f1f" stroke-width="0.12">도구</text>
<text x="273.60" y="41.30" font-size="10.8" text-anchor="start" fill="#1f1f1f" font-weight="normal"  textLength="64.2" lengthAdjust="spacingAndGlyphs" stroke="#1f1f1f" stroke-width="0.12">확장 프로그램</text>
<text x="348.60" y="41.30" font-size="10.8" text-anchor="start" fill="#1f1f1f" font-weight="normal"  textLength="30.5" lengthAdjust="spacingAndGlyphs" stroke="#1f1f1f" stroke-width="0.12">도움말</text>
<circle cx="29" cy="63.6" r="3.3" fill="none" stroke="#262626" stroke-width="1.3"/><path d="M31.4 66 l3.4 3.4" stroke="#262626" stroke-width="1.4"/>
<text x="44.00" y="68.00" font-size="10" text-anchor="start" fill="#5e5e5e" font-weight="normal"  stroke="#5e5e5e" stroke-width="0.12">메뉴</text>
<path d="M98.6 63.4 h4.1 a2.65 2.65 0 0 1 0 5.3 h-4.3" fill="none" stroke="#262626" stroke-width="1.3"/><path d="M100.2 61.2 l-2.2 2.2 2.2 2.2" fill="none" stroke="#262626" stroke-width="1.3"/>
<path d="M126.9 63.4 h-4.1 a2.65 2.65 0 0 0 0 5.3 h4.3" fill="none" stroke="#262626" stroke-width="1.3"/><path d="M125.3 61.2 l2.2 2.2 -2.2 2.2" fill="none" stroke="#262626" stroke-width="1.3"/>
<path d="M142.5 62.5 v-2.7 h7.2 v2.7" fill="none" stroke="#262626" stroke-width="1.2"/><rect x="140.3" y="62.5" width="11.6" height="5.5" rx="1.2" fill="none" stroke="#262626" stroke-width="1.2"/><rect x="142.8" y="66" width="6.6" height="3.8" fill="#edf2fa" stroke="#262626" stroke-width="1.2"/>
<rect x="163.3" y="59.6" width="9.5" height="3.6" rx="1" fill="none" stroke="#262626" stroke-width="1.2"/><path d="M172.8 61.4 h.5 v3.3 h-5 v1.8" fill="none" stroke="#262626" stroke-width="1.2"/><rect x="167.2" y="66.4" width="2.4" height="3.6" rx=".6" fill="none" stroke="#262626" stroke-width="1.1"/>
<text x="186.50" y="68.60" font-size="10.2" text-anchor="start" fill="#262626" font-weight="normal" stroke="#262626" stroke-width="0.15" textLength="25.6" lengthAdjust="spacingAndGlyphs">100%</text>
<path d="M222.30 62.80 h5 l-2.5 2.5z" fill="#262626"/>
<rect x="237.00" y="57" width="1" height="14" fill="#c7c7c7"/>
<text x="251.00" y="67.20" font-size="9.5" text-anchor="middle" fill="#262626" font-weight="normal" >₩</text>
<text x="273.60" y="67.20" font-size="9.5" text-anchor="middle" fill="#262626" font-weight="normal" >%</text>
<text x="290.20" y="67.00" font-size="9.5" text-anchor="start" fill="#262626" font-weight="normal" >.0</text>
<path d="M302 68.3 h-5 M298.6 66.6 l-1.7 1.7 1.7 1.7" fill="none" stroke="#262626" stroke-width="1"/>
<text x="312.40" y="67.00" font-size="9.5" text-anchor="start" fill="#262626" font-weight="normal" >.00</text>
<path d="M318 68.3 h5.6 M321.8 66.6 l1.7 1.7 -1.7 1.7" fill="none" stroke="#262626" stroke-width="1"/>
<text x="342.30" y="67.20" font-size="8.6" text-anchor="middle" fill="#262626" font-weight="normal" >123</text>
<rect x="356.10" y="57" width="1" height="14" fill="#c7c7c7"/>
<text x="368.40" y="68.00" font-size="10.2" text-anchor="start" fill="#262626" font-weight="normal"  stroke="#262626" stroke-width="0.12">기본값...</text>
<path d="M415.60 62.80 h5 l-2.5 2.5z" fill="#262626"/>
<rect x="431.10" y="57" width="1" height="14" fill="#c7c7c7"/>
<rect x="439.7" y="63.1" width="7.5" height="1.3" fill="#262626"/>
<rect x="454.5" y="55.8" width="24" height="16.8" rx="3" fill="none" stroke="#747775" stroke-width="1"/>
<text x="466.50" y="67.80" font-size="10" text-anchor="middle" fill="#1f1f1f" font-weight="normal" >10</text>
<path d="M488.5 60.3 v7.5 M484.75 64.05 h7.5" stroke="#262626" stroke-width="1.3"/>
<rect x="500.10" y="57" width="1" height="14" fill="#c7c7c7"/>
<text x="514.40" y="68.00" font-size="10.5" text-anchor="middle" fill="#262626" font-weight="bold" >B</text>
<path d="M534.5 60.5 h5.3 M532.8 68.2 h5.3 M537.8 60.5 l-2.8 7.7" fill="none" stroke="#262626" stroke-width="1.3"/>
<path d="M553.4 64.4 h11.9" stroke="#262626" stroke-width="1.2"/><path d="M556 62.2 a3 2.3 0 0 1 6 0 M562 66.6 a3 2.3 0 0 1 -6 0" fill="none" stroke="#262626" stroke-width="1.2"/>
<text x="583.00" y="67.00" font-size="10" text-anchor="middle" fill="#262626" font-weight="normal" >A</text>
<rect x="574.6" y="68" width="16.4" height="3" fill="#000000"/>
<rect x="597.00" y="57" width="1" height="14" fill="#c7c7c7"/>
<path d="M609.3 59.5 l3.8 3.8 -4.3 4.3 -3.8 -3.8z" fill="none" stroke="#1f1f1f" stroke-width="1.4" stroke-linejoin="round"/><path d="M606.6 57.3 l3 3" stroke="#1f1f1f" stroke-width="1.3"/><path d="M605.3 63.6 h7.5 l-4 4z" fill="#1f1f1f"/><path d="M615.3 63.6 q1.3 1.6 1.3 2.3 a1.3 1.3 0 0 1 -2.6 0 q0 -.7 1.3 -2.3z" fill="#1f1f1f"/>
<rect x="603.8" y="68.3" width="16.2" height="2.4" fill="#a8c7fa"/>
<rect x="631.6" y="60.9" width="8.8" height="8.5" fill="none" stroke="#1f1f1f" stroke-width="1.5"/><path d="M636 60.9 v8.5 M631.6 65.1 h8.8" stroke="#1f1f1f" stroke-width="1.4"/>
<rect x="649" y="54" width="20.7" height="20" rx="3" fill="#d3e3fd"/>
<path d="M657.7 59.9 h-2.9 v2.2 M654.8 66.9 v2.3 h2.9 M661.3 59.9 h2.9 v2.2 M664.2 66.9 v2.3 h-2.9" fill="none" stroke="#0a2a5e" stroke-width="1.6"/><path d="M653.9 64.5 h4 M656.5 62.7 l1.8 1.8 -1.8 1.8 M665.1 64.5 h-4 M662.5 62.7 l-1.8 1.8 1.8 1.8" fill="none" stroke="#0a2a5e" stroke-width="1.5"/>
<path d="M671.80 62.80 h5 l-2.5 2.5z" fill="#262626"/>
<rect x="681.10" y="57" width="1" height="14" fill="#c7c7c7"/>
<path d="M688.75 59.7 h10.3 M690.8 62.3 h6.2 M688.75 64.9 h10.3 M690.8 67.5 h6.2 M688.75 69.8 h10.3" stroke="#262626" stroke-width="1.1"/>
<path d="M704.20 62.80 h5 l-2.5 2.5z" fill="#262626"/>
<path d="M722.8 59.5 v6.8 M720 63.8 l2.8 2.8 2.8 -2.8 M718.4 69.6 h8.8" fill="none" stroke="#262626" stroke-width="1.2"/>
<path d="M733.20 62.80 h5 l-2.5 2.5z" fill="#262626"/>
<path d="M747.6 59.5 v10.3 M751.6 59.5 v10.3" stroke="#262626" stroke-width="1.2"/><path d="M751.6 64.6 h4.5 M754.2 62.6 l2 2 -2 2" fill="none" stroke="#262626" stroke-width="1.2"/>
<path d="M762.20 62.80 h5 l-2.5 2.5z" fill="#262626"/>
<text x="781.00" y="67.20" font-size="9.5" text-anchor="middle" fill="#262626" font-weight="normal" >A</text>
<path d="M776.5 69.2 h8.8 M783.6 67.6 l1.7 1.6 -1.7 1.6" fill="none" stroke="#262626" stroke-width="1.1"/>
<path d="M791.50 62.80 h5 l-2.5 2.5z" fill="#262626"/>
<rect x="802.10" y="57" width="1" height="14" fill="#c7c7c7"/>
<path d="M814 61.3 h-1.3 a3.3 3.3 0 0 0 0 6.6 h1.3 M818 61.3 h1.3 a3.3 3.3 0 0 1 0 6.6 h-1.3 M813.3 64.6 h5.4" fill="none" stroke="#262626" stroke-width="1.2"/>
<path d="M833.3 59.2 h11.5 v8.5 h-9 l-2.5 2.5z" fill="none" stroke="#262626" stroke-width="1.2" stroke-linejoin="round"/><path d="M839 61 v5 M836.5 63.5 h5" stroke="#262626" stroke-width="1.2"/>
<rect x="856.1" y="59.3" width="10" height="10" rx="1.5" fill="none" stroke="#262626" stroke-width="1.2"/><path d="M859 66.8 v-3 M861.1 66.8 v-5 M863.2 66.8 v-2" stroke="#262626" stroke-width="1.1"/>
<path d="M879.6 60 h8.8 l-3.3 4.2 v5 h-2.2 v-5z" fill="none" stroke="#262626" stroke-width="1.2" stroke-linejoin="round"/>
<path d="M899.3 67.5 v-8 h8.5" fill="none" stroke="#262626" stroke-width="1.1"/><rect x="901.4" y="61.6" width="9.3" height="8" rx="1.2" fill="none" stroke="#262626" stroke-width="1.2"/><path d="M901.4 64.3 h9.3 M901.4 66.9 h9.3 M904.5 64.3 v5.3 M907.6 64.3 v5.3" stroke="#262626" stroke-width="1"/>
<path d="M915.80 62.80 h5 l-2.5 2.5z" fill="#262626"/>
<path d="M939 60.5 v-.5 h-6.3 l3.3 4.5 -3.3 4.5 h6.3 v-.5" fill="none" stroke="#262626" stroke-width="1.3"/>
<rect x="951.00" y="57" width="1" height="14" fill="#c7c7c7"/>
<rect x="958.75" y="61.9" width="12.25" height="7.1" rx=".8" fill="#1f1f1f"/><rect x="961" y="65" width="7.8" height="1" fill="#6f6f6f"/>
<path d="M976.90 62.80 h5 l-2.5 2.5z" fill="#262626"/>
<rect x="0" y="83.5" width="1280" height="21" fill="#ffffff"/>
<text x="10.00" y="96.60" font-size="9.4" text-anchor="start" fill="#1f1f1f" font-weight="normal"  textLength="22" lengthAdjust="spacingAndGlyphs">A1:C1</text>
<path d="M61.30 92.30 h5 l-2.5 2.5z" fill="#262626"/>
<rect x="75" y="88.5" width="1" height="11.3" fill="#c7c7c7"/>
<text x="83.20" y="97.60" font-size="11.6" text-anchor="start" fill="#5f6368" font-weight="normal" font-style="italic" font-family="Liberation Serif, serif" textLength="10" lengthAdjust="spacingAndGlyphs">fx</text>
<text x="100.60" y="96.20" font-size="9.4" text-anchor="start" fill="#1f1f1f" font-weight="normal"  textLength="17.4" lengthAdjust="spacingAndGlyphs" stroke="#1f1f1f" stroke-width="0.12">제품</text>
</svg>
</body></html>
